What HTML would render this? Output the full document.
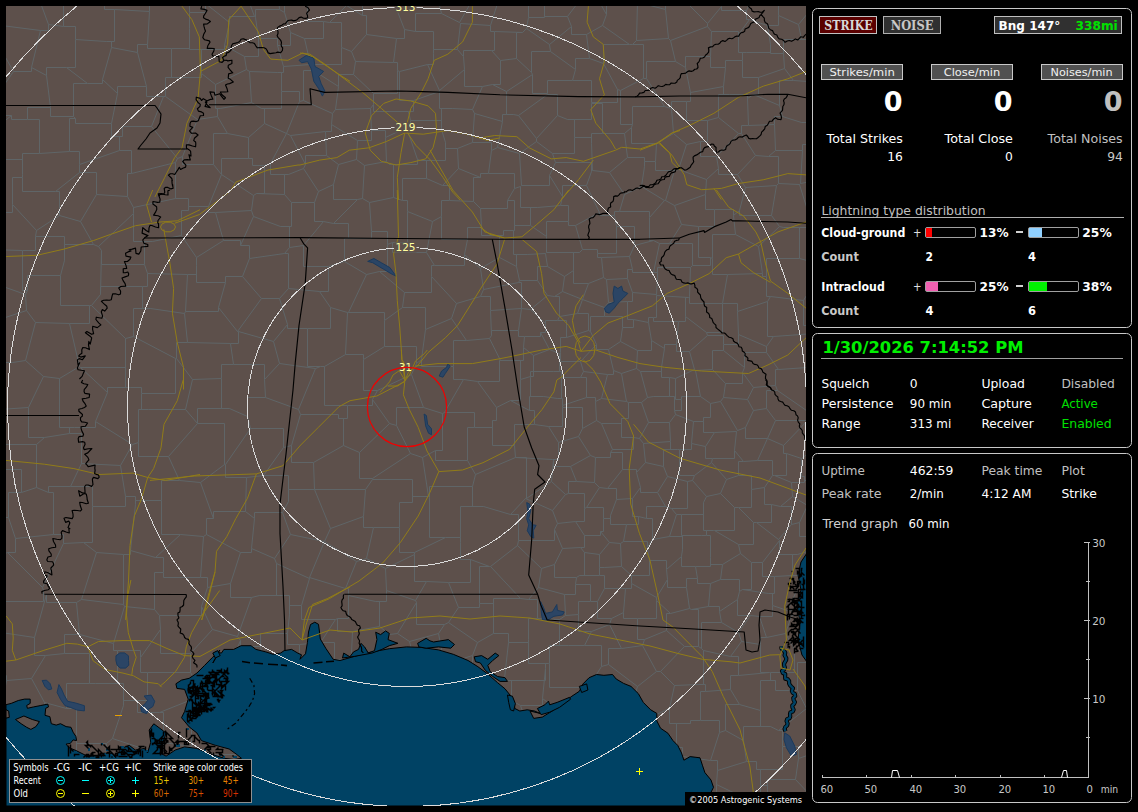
<!DOCTYPE html>
<html><head><meta charset="utf-8"><title>NexStorm</title>
<style>html,body{margin:0;padding:0;background:#000;overflow:hidden}svg{display:block}text{white-space:pre}</style>
</head><body>
<svg width="1138" height="812" viewBox="0 0 1138 812">
<rect width="1138" height="812" fill="#000"/>
<defs><clipPath id="mc"><rect x="6" y="6" width="800" height="800"/></clipPath></defs>
<g clip-path="url(#mc)">
<rect x="6" y="6" width="800" height="800" fill="#5d504b"/>
<path d="M801.5 458.5L820.5 444.5M801.5 458.5V476.5H804.5M804.5 476.5V480.5H814.5M801.5 458.5L786.5 453.5M786.5 453.5H783.5V445.5M783.5 445.5L809.5 418.5M816.5 654.5L794.5 649.5M817.5 662.5H797.5V690.5M794.5 649.5V672.5H770.5M797.5 690.5H775.5V680.5M775.5 680.5H770.5V672.5M816.5 2.5L798.5 24.5M828.5 48.5V39.5H801.5M798.5 24.5L801.5 39.5M34.5 -13.5L48.5 24.5M84.5 -8.5H63.5V26.5M63.5 26.5L48.5 24.5M-6.5 24.5L40.5 30.5M40.5 30.5H48.5V24.5M363.5 516.5L330.5 528.5M363.5 516.5L365.5 489.5M365.5 489.5L314.5 489.5M330.5 528.5L314.5 489.5M246.5 808.5L234.5 791.5M234.5 791.5L235.5 785.5M286.5 774.5V756.5H267.5M286.5 774.5L282.5 792.5M262.5 809.5L282.5 792.5M235.5 785.5H267.5V756.5M723.5 350.5L744.5 367.5M723.5 350.5H712.5V369.5M712.5 369.5L725.5 383.5M725.5 383.5H742.5V372.5M744.5 367.5L742.5 372.5M766.5 352.5L766.5 346.5M766.5 352.5H744.5V367.5M766.5 346.5L738.5 334.5M738.5 334.5V344.5H723.5M723.5 344.5L723.5 350.5M785.5 633.5L794.5 649.5M785.5 633.5L791.5 615.5M791.5 615.5L804.5 616.5M827.5 639.5L804.5 616.5M689.5 351.5L707.5 335.5M689.5 351.5L694.5 369.5M723.5 344.5V335.5H707.5M712.5 369.5L695.5 370.5M694.5 369.5L695.5 370.5M785.5 633.5L766.5 637.5M769.5 672.5L770.5 672.5M769.5 672.5H760.5V644.5M760.5 644.5V637.5H766.5M791.5 615.5V610.5H787.5M787.5 610.5L772.5 605.5M766.5 637.5L759.5 616.5M772.5 605.5V616.5H759.5M760.5 644.5L741.5 641.5M741.5 641.5L738.5 632.5M738.5 632.5L750.5 615.5M759.5 616.5L750.5 615.5M760.5 710.5L739.5 704.5M760.5 710.5V726.5H770.5M770.5 726.5H743.5V740.5M739.5 704.5H725.5V730.5M725.5 730.5L743.5 740.5M797.5 690.5L806.5 708.5M775.5 680.5H760.5V710.5M806.5 708.5L778.5 730.5M778.5 730.5L770.5 726.5M746.5 761.5L743.5 740.5M746.5 761.5H756.5V769.5M778.5 730.5H782.5V746.5M756.5 769.5H782.5V746.5M806.5 708.5L808.5 709.5M746.5 761.5L717.5 770.5M717.5 770.5V760.5H710.5M725.5 730.5L719.5 732.5M710.5 760.5L719.5 732.5M738.5 334.5L737.5 311.5M737.5 311.5V303.5H722.5M707.5 335.5L706.5 332.5M706.5 332.5H722.5V303.5M722.5 303.5L722.5 303.5M161.5 0.5H149.5V11.5M161.5 0.5H189.5V12.5M149.5 11.5L147.5 44.5M189.5 12.5L189.5 28.5M189.5 28.5V48.5H171.5M147.5 44.5V48.5H171.5M104.5 -6.5V9.5H114.5M114.5 9.5L149.5 11.5M205.5 3.5V12.5H189.5M122.5 136.5V126.5H151.5M122.5 136.5H119.5V150.5M119.5 150.5H131.5V173.5M175.5 162.5L131.5 173.5M175.5 162.5L177.5 158.5M151.5 126.5L177.5 158.5M288.5 288.5L319.5 291.5M288.5 288.5V253.5H284.5M319.5 291.5H328.5V266.5M289.5 247.5L284.5 253.5M289.5 247.5L303.5 245.5M328.5 266.5H303.5V245.5M289.5 247.5V226.5H280.5M284.5 253.5L249.5 258.5M280.5 226.5L253.5 216.5M249.5 258.5V245.5H240.5M240.5 245.5L253.5 216.5M229.5 22.5V16.5H254.5M229.5 22.5L205.5 3.5M254.5 16.5L244.5 -10.5M224.5 45.5L244.5 56.5M224.5 45.5V49.5H210.5M210.5 49.5H201.5V73.5M244.5 56.5L246.5 69.5M246.5 69.5L215.5 84.5M201.5 73.5L215.5 84.5M229.5 22.5L224.5 45.5M189.5 28.5V49.5H210.5M182.5 77.5H201.5V73.5M182.5 77.5H171.5V48.5M313.5 70.5L338.5 86.5M313.5 70.5H303.5V100.5M303.5 100.5L332.5 113.5M338.5 86.5L335.5 109.5M335.5 109.5L332.5 113.5M284.5 12.5L279.5 9.5M284.5 12.5L290.5 32.5M279.5 9.5H255.5V17.5M290.5 32.5V45.5H277.5M277.5 45.5V38.5H258.5M255.5 17.5L258.5 38.5M254.5 16.5L255.5 17.5M277.5 -18.5L279.5 9.5M244.5 56.5H258.5V38.5M80.5 788.5L105.5 766.5M80.5 788.5H93.5V812.5M105.5 766.5V786.5H125.5M125.5 786.5V812.5H121.5M263.5 475.5L283.5 447.5M263.5 475.5H288.5V501.5M313.5 462.5L314.5 489.5M313.5 462.5H291.5V445.5M288.5 501.5V489.5H314.5M291.5 445.5L283.5 447.5M338.5 418.5H347.5V405.5M338.5 418.5V414.5H300.5M347.5 405.5H324.5V366.5M300.5 414.5L298.5 409.5M298.5 409.5L315.5 368.5M315.5 368.5L320.5 366.5M320.5 366.5L324.5 366.5M313.5 462.5L343.5 445.5M343.5 445.5V418.5H338.5M291.5 445.5L300.5 414.5M666.5 630.5L684.5 646.5M666.5 630.5L644.5 639.5M684.5 646.5L660.5 671.5M656.5 671.5L660.5 671.5M656.5 671.5L642.5 645.5M644.5 639.5L642.5 645.5M282.5 792.5V815.5H313.5M234.5 791.5H201.5V798.5M201.5 798.5V821.5H192.5M-0.5 675.5H6.5V680.5M6.5 680.5L-1.5 723.5M31.5 678.5L6.5 680.5M31.5 678.5L44.5 702.5M44.5 702.5V732.5H20.5M-1.5 723.5V732.5H20.5M363.5 516.5V527.5H373.5M373.5 527.5L366.5 558.5M330.5 528.5L324.5 541.5M366.5 558.5L356.5 561.5M356.5 561.5L324.5 541.5M324.5 541.5L324.5 541.5M356.5 561.5L345.5 588.5M345.5 588.5L309.5 577.5M324.5 541.5L309.5 577.5M112.5 738.5L151.5 751.5M112.5 738.5L106.5 743.5M106.5 743.5L105.5 766.5M125.5 786.5H152.5V776.5M151.5 751.5L152.5 776.5M159.5 812.5L160.5 784.5M152.5 776.5L160.5 784.5M201.5 798.5L187.5 779.5M160.5 784.5L187.5 779.5M263.5 475.5L246.5 477.5M283.5 447.5V428.5H250.5M250.5 428.5L225.5 464.5M246.5 477.5H225.5V464.5M-6.5 395.5V362.5H12.5M12.5 362.5H-22.5V346.5M43.5 376.5L25.5 360.5M43.5 376.5L59.5 378.5M59.5 378.5L79.5 366.5M79.5 366.5L69.5 323.5M25.5 360.5L35.5 322.5M35.5 322.5L69.5 323.5M-0.5 409.5L28.5 407.5M28.5 407.5L43.5 376.5M12.5 362.5L25.5 360.5M74.5 427.5H69.5V433.5M74.5 427.5H59.5V378.5M28.5 407.5V437.5H44.5M44.5 437.5L69.5 433.5M-15.5 324.5L26.5 310.5M26.5 310.5L35.5 322.5M80.5 367.5H125.5V338.5M80.5 367.5L79.5 366.5M89.5 305.5L91.5 305.5M89.5 305.5V323.5H69.5M91.5 305.5L125.5 338.5M831.5 177.5L800.5 183.5M800.5 183.5L799.5 184.5M808.5 213.5L799.5 184.5M783.5 227.5H808.5V213.5M783.5 227.5H799.5V258.5M814.5 262.5L799.5 258.5M685.5 316.5L706.5 332.5M685.5 316.5V321.5H678.5M689.5 351.5H676.5V344.5M678.5 321.5L676.5 344.5M797.5 554.5H779.5V540.5M797.5 554.5H792.5V575.5M779.5 540.5L762.5 562.5M762.5 562.5V576.5H774.5M774.5 576.5L792.5 575.5M787.5 610.5L800.5 582.5M800.5 582.5V575.5H792.5M768.5 593.5H772.5V605.5M768.5 593.5H774.5V576.5M818.5 536.5H799.5V522.5M807.5 505.5L799.5 522.5M800.5 582.5L810.5 583.5M804.5 616.5V598.5H819.5M810.5 550.5L797.5 554.5M720.5 493.5L734.5 507.5M720.5 493.5L726.5 479.5M751.5 489.5V507.5H738.5M751.5 489.5V475.5H738.5M734.5 507.5L738.5 507.5M726.5 479.5L738.5 475.5M679.5 449.5H691.5V443.5M679.5 449.5V475.5H694.5M691.5 443.5L705.5 446.5M705.5 446.5V458.5H712.5M694.5 475.5L711.5 462.5M711.5 462.5L712.5 458.5M714.5 432.5L705.5 446.5M714.5 432.5L736.5 431.5M736.5 431.5L734.5 450.5M734.5 450.5V458.5H712.5M706.5 496.5L692.5 480.5M706.5 496.5L720.5 493.5M692.5 480.5L694.5 475.5M726.5 479.5L711.5 462.5M743.5 461.5L734.5 450.5M743.5 461.5H738.5V475.5M675.5 378.5L694.5 369.5M675.5 378.5V399.5H681.5M695.5 370.5L700.5 396.5M681.5 399.5V396.5H700.5M714.5 432.5H703.5V417.5M691.5 443.5L693.5 421.5M693.5 421.5H703.5V417.5M736.5 431.5L737.5 430.5M737.5 430.5L720.5 401.5M720.5 401.5L710.5 403.5M703.5 417.5H710.5V403.5M725.5 383.5L723.5 397.5M720.5 401.5L723.5 397.5M710.5 403.5L700.5 396.5M721.5 622.5L738.5 632.5M721.5 622.5H701.5V648.5M701.5 648.5L703.5 650.5M741.5 641.5L730.5 656.5M730.5 656.5L703.5 650.5M769.5 672.5L738.5 675.5M730.5 656.5H738.5V675.5M739.5 704.5L730.5 689.5M738.5 675.5H730.5V689.5M721.5 622.5L719.5 611.5M750.5 615.5H737.5V599.5M737.5 599.5L719.5 611.5M701.5 648.5L698.5 646.5M698.5 646.5V609.5H691.5M691.5 609.5L708.5 606.5M719.5 611.5V606.5H708.5M738.5 824.5V796.5H741.5M715.5 820.5L705.5 794.5M741.5 796.5L716.5 784.5M716.5 784.5V794.5H705.5M717.5 770.5L716.5 784.5M756.5 769.5H760.5V785.5M760.5 785.5V796.5H741.5M760.5 785.5H767.5V789.5M775.5 816.5H767.5V789.5M782.5 746.5H798.5V758.5M798.5 758.5L795.5 779.5M767.5 789.5V779.5H795.5M798.5 758.5L818.5 751.5M600.5 819.5L577.5 802.5M577.5 802.5L586.5 777.5M586.5 777.5L599.5 773.5M619.5 809.5H599.5V773.5M577.5 802.5V805.5H557.5M564.5 765.5V777.5H586.5M564.5 765.5H547.5V790.5M547.5 790.5H557.5V805.5M553.5 818.5V805.5H557.5M669.5 708.5L674.5 685.5M669.5 708.5V723.5H690.5M674.5 685.5L698.5 684.5M700.5 720.5H690.5V723.5M700.5 720.5V691.5H705.5M705.5 691.5V684.5H698.5M645.5 731.5L649.5 717.5M645.5 731.5V743.5H654.5M649.5 717.5L669.5 708.5M654.5 743.5V747.5H676.5M676.5 747.5V723.5H690.5M698.5 646.5L684.5 646.5M660.5 671.5L674.5 685.5M703.5 650.5V684.5H698.5M710.5 760.5L682.5 756.5M719.5 732.5V720.5H700.5M682.5 756.5V747.5H676.5M730.5 689.5L705.5 691.5M798.5 24.5L778.5 15.5M778.5 15.5L778.5 -3.5M800.5 183.5L802.5 150.5M808.5 144.5H802.5V150.5M372.5 399.5L389.5 423.5M372.5 399.5L377.5 390.5M377.5 390.5L411.5 374.5M389.5 423.5L396.5 425.5M396.5 425.5V407.5H423.5M411.5 374.5L423.5 407.5M343.5 445.5L359.5 452.5M347.5 405.5H372.5V399.5M359.5 452.5L389.5 423.5M384.5 346.5L363.5 359.5M384.5 346.5L384.5 320.5M384.5 320.5V312.5H348.5M345.5 354.5L347.5 312.5M345.5 354.5H363.5V359.5M348.5 312.5L347.5 312.5M416.5 363.5V346.5H384.5M416.5 363.5L411.5 374.5M377.5 390.5H363.5V359.5M307.5 328.5H330.5V307.5M307.5 328.5V366.5H320.5M330.5 307.5L347.5 312.5M324.5 366.5L345.5 354.5M319.5 291.5L330.5 307.5M328.5 266.5L344.5 261.5M366.5 274.5L344.5 261.5M366.5 274.5L348.5 312.5M122.5 136.5H111.5V123.5M119.5 150.5L79.5 164.5M79.5 164.5V151.5H69.5M69.5 151.5V118.5H75.5M111.5 123.5H75.5V118.5M175.5 162.5L175.5 198.5M131.5 173.5H127.5V196.5M127.5 196.5L133.5 207.5M133.5 207.5L175.5 198.5M353.5 74.5L373.5 93.5M353.5 74.5H338.5V86.5M370.5 108.5L335.5 109.5M370.5 108.5L373.5 104.5M373.5 93.5L373.5 104.5M303.5 245.5L323.5 221.5M348.5 238.5H344.5V261.5M348.5 238.5V223.5H333.5M323.5 221.5L333.5 223.5M280.5 226.5H291.5V202.5M291.5 202.5L314.5 202.5M323.5 221.5H314.5V202.5M333.5 223.5L357.5 199.5M314.5 202.5L318.5 191.5M318.5 191.5L333.5 184.5M333.5 184.5V199.5H357.5M213.5 164.5V133.5H227.5M213.5 164.5H182.5V156.5M182.5 156.5L197.5 119.5M227.5 133.5L217.5 116.5M217.5 116.5L197.5 119.5M165.5 96.5L197.5 119.5M165.5 96.5L163.5 96.5M163.5 96.5L151.5 126.5M177.5 158.5L182.5 156.5M182.5 77.5H165.5V96.5M220.5 108.5H215.5V84.5M220.5 108.5H217.5V116.5M371.5 231.5H387.5V244.5M371.5 231.5L369.5 202.5M369.5 202.5L393.5 197.5M392.5 242.5H407.5V211.5M392.5 242.5L387.5 244.5M393.5 197.5L402.5 200.5M402.5 200.5H407.5V211.5M379.5 271.5H387.5V244.5M379.5 271.5L366.5 274.5M348.5 238.5H371.5V231.5M362.5 198.5L357.5 199.5M362.5 198.5L369.5 202.5M432.5 221.5L426.5 252.5M432.5 221.5L407.5 211.5M426.5 252.5H392.5V242.5M449.5 200.5V185.5H442.5M449.5 200.5H441.5V216.5M426.5 178.5L442.5 185.5M426.5 178.5H402.5V200.5M441.5 216.5L432.5 221.5M127.5 196.5L96.5 194.5M79.5 164.5L79.5 172.5M96.5 194.5V172.5H79.5M473.5 201.5L449.5 200.5M473.5 201.5L480.5 208.5M467.5 239.5H441.5V216.5M467.5 239.5V227.5H481.5M481.5 227.5L480.5 208.5M514.5 188.5L507.5 200.5M514.5 188.5V173.5H488.5M473.5 201.5V177.5H480.5M507.5 200.5V208.5H480.5M488.5 173.5H480.5V177.5M442.5 185.5L458.5 168.5M480.5 177.5L458.5 168.5M426.5 178.5V160.5H420.5M420.5 160.5H445.5V142.5M445.5 142.5V148.5H457.5M458.5 168.5L457.5 148.5M310.5 64.5L310.5 64.5M310.5 64.5L283.5 66.5M283.5 66.5L277.5 45.5M290.5 32.5L304.5 38.5M304.5 38.5L310.5 64.5M353.5 74.5L355.5 61.5M310.5 64.5L313.5 70.5M355.5 61.5L351.5 51.5M351.5 51.5L341.5 47.5M310.5 64.5H341.5V47.5M331.5 124.5L332.5 113.5M331.5 124.5L357.5 140.5M370.5 108.5L371.5 130.5M371.5 130.5V140.5H357.5M325.5 131.5H331.5V124.5M325.5 131.5L326.5 155.5M326.5 155.5L338.5 164.5M338.5 164.5L356.5 159.5M357.5 140.5L356.5 159.5M338.5 164.5L333.5 184.5M362.5 198.5L364.5 165.5M356.5 159.5L364.5 165.5M277.5 72.5L249.5 71.5M277.5 72.5H281.5V91.5M281.5 91.5V108.5H261.5M249.5 71.5L251.5 102.5M251.5 102.5L261.5 108.5M246.5 69.5L249.5 71.5M283.5 66.5V72.5H277.5M303.5 100.5L299.5 101.5M299.5 101.5V91.5H281.5M220.5 108.5L251.5 102.5M54.5 754.5V784.5H58.5M54.5 754.5L27.5 745.5M27.5 745.5L6.5 778.5M54.5 788.5L14.5 788.5M54.5 788.5V784.5H58.5M14.5 788.5H6.5V778.5M80.5 788.5L58.5 784.5M76.5 735.5V754.5H54.5M76.5 735.5V743.5H106.5M66.5 708.5H76.5V735.5M66.5 708.5L44.5 702.5M20.5 732.5H27.5V745.5M-1.5 777.5L6.5 778.5M12.5 818.5L14.5 788.5M49.5 824.5H54.5V788.5M365.5 489.5L372.5 479.5M314.5 489.5L314.5 489.5M359.5 452.5V478.5H372.5M372.5 479.5L372.5 478.5M396.5 425.5L410.5 453.5M372.5 478.5L410.5 453.5M423.5 407.5L442.5 413.5M410.5 453.5L422.5 457.5M422.5 457.5L435.5 450.5M442.5 413.5V450.5H435.5M286.5 774.5V767.5H313.5M313.5 767.5V774.5H319.5M319.5 774.5L318.5 810.5M235.5 785.5L216.5 754.5M267.5 756.5L264.5 740.5M264.5 740.5V726.5H243.5M216.5 754.5H243.5V726.5M187.5 779.5H196.5V752.5M216.5 754.5L196.5 752.5M200.5 482.5L224.5 464.5M200.5 482.5L179.5 480.5M224.5 464.5V423.5H197.5M197.5 423.5L197.5 423.5M197.5 423.5L168.5 456.5M179.5 480.5L168.5 456.5M95.5 421.5L132.5 444.5M95.5 421.5L107.5 392.5M107.5 392.5V387.5H130.5M132.5 444.5L138.5 442.5M138.5 442.5V409.5H148.5M148.5 409.5H141.5V393.5M141.5 393.5V387.5H130.5M74.5 427.5H95.5V421.5M80.5 367.5L107.5 392.5M125.5 338.5L125.5 338.5M125.5 338.5V387.5H130.5M185.5 409.5L197.5 423.5M185.5 409.5L148.5 409.5M168.5 456.5H138.5V442.5M185.5 409.5L192.5 379.5M175.5 358.5V393.5H141.5M175.5 358.5L176.5 358.5M192.5 379.5L176.5 358.5M175.5 358.5L133.5 336.5M125.5 338.5L133.5 336.5M25.5 294.5L-5.5 283.5M25.5 294.5L27.5 290.5M27.5 290.5H22.5V250.5M22.5 250.5L-11.5 249.5M26.5 310.5L25.5 294.5M89.5 305.5H60.5V275.5M60.5 275.5H27.5V290.5M44.5 437.5L36.5 444.5M-2.5 444.5L36.5 444.5M-5.5 631.5L34.5 637.5M31.5 678.5L45.5 655.5M45.5 655.5H34.5V637.5M91.5 305.5L100.5 294.5M150.5 308.5H133.5V336.5M150.5 308.5H142.5V286.5M100.5 294.5V286.5H142.5M543.5 396.5H530.5V377.5M543.5 396.5L557.5 398.5M561.5 383.5V398.5H557.5M561.5 383.5V371.5H553.5M553.5 371.5H530.5V377.5M766.5 346.5L773.5 336.5M737.5 311.5L767.5 301.5M773.5 336.5H767.5V301.5M583.5 371.5L607.5 374.5M583.5 371.5L580.5 361.5M608.5 349.5L613.5 370.5M608.5 349.5H596.5V344.5M580.5 361.5L596.5 344.5M607.5 374.5H613.5V370.5M648.5 422.5L641.5 402.5M648.5 422.5L669.5 422.5M669.5 422.5L675.5 414.5M653.5 396.5L647.5 397.5M653.5 396.5H674.5V410.5M674.5 410.5L675.5 414.5M641.5 402.5L647.5 397.5M639.5 438.5L648.5 422.5M639.5 438.5L643.5 443.5M643.5 443.5L670.5 441.5M670.5 441.5L669.5 422.5M677.5 449.5H670.5V441.5M677.5 449.5L679.5 449.5M693.5 421.5L675.5 414.5M675.5 378.5L669.5 377.5M669.5 377.5V396.5H653.5M681.5 399.5V410.5H674.5M661.5 367.5V371.5H640.5M661.5 367.5L664.5 348.5M664.5 348.5L651.5 340.5M651.5 340.5V350.5H637.5M637.5 350.5L636.5 368.5M640.5 371.5L636.5 368.5M669.5 377.5H661.5V367.5M647.5 397.5L640.5 371.5M676.5 344.5H664.5V348.5M678.5 321.5H653.5V317.5M653.5 317.5H648.5V322.5M648.5 322.5L651.5 340.5M608.5 349.5L620.5 341.5M620.5 341.5L637.5 350.5M621.5 373.5L613.5 370.5M621.5 373.5L636.5 368.5M622.5 327.5V316.5H604.5M622.5 327.5H633.5V319.5M633.5 319.5H627.5V301.5M627.5 301.5L608.5 302.5M604.5 316.5L604.5 307.5M608.5 302.5L604.5 307.5M620.5 341.5L622.5 327.5M590.5 331.5L596.5 344.5M590.5 331.5V316.5H604.5M648.5 322.5L633.5 319.5M580.5 377.5H586.5V397.5M580.5 377.5H561.5V383.5M557.5 398.5H562.5V405.5M586.5 397.5L562.5 405.5M264.5 740.5H284.5V729.5M315.5 758.5L313.5 767.5M315.5 758.5L309.5 741.5M309.5 741.5V729.5H284.5M804.5 476.5V482.5H791.5M807.5 505.5L792.5 496.5M791.5 482.5L792.5 496.5M786.5 453.5V475.5H774.5M791.5 482.5L774.5 475.5M757.5 460.5L743.5 461.5M757.5 460.5H772.5V475.5M751.5 489.5L764.5 487.5M764.5 487.5L772.5 475.5M756.5 522.5H771.5V504.5M756.5 522.5L778.5 539.5M778.5 539.5L791.5 524.5M791.5 524.5V506.5H780.5M771.5 504.5L780.5 506.5M753.5 522.5L738.5 507.5M753.5 522.5L756.5 522.5M764.5 487.5V504.5H771.5M779.5 540.5L778.5 539.5M799.5 522.5L791.5 524.5M792.5 496.5L780.5 506.5M774.5 475.5L772.5 475.5M622.5 469.5V452.5H610.5M622.5 469.5L607.5 488.5M610.5 452.5V457.5H595.5M595.5 457.5L594.5 482.5M594.5 482.5L599.5 487.5M607.5 488.5L599.5 487.5M609.5 624.5L611.5 618.5M609.5 624.5L591.5 631.5M590.5 601.5H578.5V614.5M590.5 601.5L597.5 601.5M591.5 631.5H578.5V614.5M597.5 601.5V618.5H611.5M666.5 630.5V613.5H670.5M691.5 609.5L689.5 608.5M670.5 613.5L689.5 608.5M652.5 539.5V518.5H646.5M652.5 539.5L669.5 536.5M646.5 518.5V506.5H665.5M665.5 506.5L671.5 508.5M671.5 508.5L676.5 514.5M676.5 514.5L669.5 536.5M742.5 372.5L753.5 387.5M723.5 397.5L747.5 399.5M747.5 399.5L753.5 387.5M778.5 369.5L766.5 352.5M778.5 369.5H775.5V385.5M753.5 387.5L775.5 385.5M806.5 410.5L777.5 390.5M778.5 369.5L807.5 367.5M775.5 385.5L777.5 390.5M745.5 427.5L753.5 410.5M745.5 427.5V438.5H767.5M775.5 420.5L767.5 438.5M775.5 420.5L766.5 408.5M766.5 408.5L753.5 410.5M767.5 438.5L767.5 438.5M737.5 430.5L745.5 427.5M747.5 399.5L753.5 410.5M757.5 460.5L767.5 438.5M783.5 445.5L767.5 438.5M807.5 413.5V420.5H775.5M777.5 390.5H766.5V408.5M753.5 522.5V544.5H738.5M734.5 507.5V530.5H714.5M714.5 530.5L738.5 544.5M636.5 472.5L645.5 462.5M636.5 472.5L640.5 487.5M645.5 462.5L663.5 466.5M640.5 487.5V492.5H657.5M657.5 492.5L667.5 476.5M663.5 466.5L667.5 476.5M622.5 469.5H636.5V472.5M610.5 452.5L612.5 449.5M612.5 449.5H633.5V437.5M633.5 437.5L639.5 438.5M643.5 443.5L645.5 462.5M632.5 498.5L640.5 487.5M632.5 498.5L616.5 499.5M616.5 499.5V488.5H607.5M677.5 449.5H663.5V466.5M632.5 498.5V516.5H638.5M638.5 516.5L646.5 518.5M665.5 506.5L657.5 492.5M687.5 481.5V508.5H671.5M687.5 481.5L667.5 476.5M692.5 480.5L687.5 481.5M742.5 589.5L739.5 591.5M742.5 589.5H751.5V562.5M739.5 591.5V579.5H720.5M720.5 579.5L722.5 564.5M722.5 564.5L740.5 553.5M751.5 562.5L740.5 553.5M768.5 593.5L742.5 589.5M737.5 599.5L739.5 591.5M762.5 562.5L751.5 562.5M710.5 583.5L708.5 606.5M710.5 583.5L720.5 579.5M738.5 544.5L740.5 553.5M805.5 815.5L811.5 796.5M795.5 779.5L811.5 796.5M675.5 780.5H645.5V786.5M675.5 780.5V795.5H689.5M689.5 795.5L674.5 823.5M674.5 823.5H642.5V794.5M642.5 794.5L645.5 786.5M654.5 743.5L641.5 775.5M641.5 775.5H645.5V786.5M682.5 756.5L675.5 780.5M705.5 794.5L689.5 795.5M622.5 810.5L642.5 794.5M610.5 705.5H589.5V685.5M610.5 705.5L635.5 693.5M637.5 686.5L635.5 693.5M637.5 686.5L608.5 664.5M589.5 685.5L601.5 666.5M601.5 666.5L608.5 664.5M649.5 717.5L635.5 693.5M656.5 671.5L637.5 686.5M621.5 648.5L642.5 645.5M621.5 648.5H608.5V664.5M568.5 645.5L584.5 645.5M568.5 645.5H549.5V663.5M584.5 645.5H601.5V666.5M549.5 663.5V687.5H583.5M583.5 687.5L589.5 685.5M621.5 648.5L609.5 624.5M584.5 645.5L591.5 631.5M599.5 773.5L605.5 763.5M641.5 775.5L613.5 760.5M613.5 760.5L605.5 763.5M645.5 731.5L625.5 734.5M613.5 760.5L625.5 734.5M610.5 705.5L610.5 722.5M625.5 734.5L610.5 722.5M757.5 -14.5L746.5 10.5M746.5 10.5H721.5V6.5M379.5 271.5L404.5 292.5M384.5 320.5L402.5 307.5M404.5 292.5L402.5 307.5M50.5 107.5H27.5V119.5M50.5 107.5L46.5 75.5M11.5 115.5H4.5V84.5M11.5 115.5V119.5H27.5M13.5 71.5L4.5 84.5M13.5 71.5H31.5V67.5M31.5 67.5L46.5 75.5M39.5 153.5L69.5 151.5M39.5 153.5V119.5H27.5M75.5 118.5L73.5 116.5M73.5 116.5H50.5V107.5M-8.5 131.5L11.5 115.5M-2.5 159.5H22.5V174.5M22.5 174.5V153.5H39.5M-7.5 34.5L13.5 71.5M40.5 30.5L31.5 67.5M163.5 96.5H146.5V86.5M111.5 123.5L117.5 93.5M146.5 86.5H117.5V93.5M147.5 44.5H137.5V52.5M146.5 86.5L137.5 52.5M221.5 174.5L213.5 164.5M221.5 174.5L221.5 174.5M221.5 174.5V158.5H252.5M227.5 133.5L248.5 137.5M252.5 158.5H248.5V137.5M299.5 101.5L286.5 133.5M261.5 108.5H264.5V123.5M286.5 133.5L264.5 123.5M248.5 137.5L264.5 123.5M240.5 245.5V240.5H223.5M251.5 210.5L253.5 216.5M251.5 210.5L215.5 212.5M223.5 240.5L215.5 212.5M221.5 174.5L208.5 206.5M175.5 198.5H188.5V210.5M188.5 210.5V206.5H208.5M251.5 210.5L253.5 195.5M253.5 195.5L221.5 174.5M208.5 206.5V212.5H215.5M288.5 288.5L279.5 298.5M307.5 328.5H287.5V324.5M287.5 324.5L279.5 298.5M192.5 379.5L221.5 378.5M197.5 423.5V408.5H229.5M221.5 378.5V408.5H229.5M250.5 428.5L247.5 416.5M298.5 409.5L265.5 397.5M265.5 397.5H247.5V416.5M225.5 464.5L224.5 464.5M229.5 408.5L247.5 416.5M150.5 308.5L184.5 313.5M176.5 358.5V342.5H187.5M184.5 313.5L187.5 342.5M60.5 275.5L64.5 260.5M22.5 250.5H35.5V236.5M64.5 260.5V236.5H35.5M507.5 200.5H514.5V230.5M514.5 230.5L513.5 230.5M481.5 227.5V235.5H503.5M503.5 235.5V230.5H513.5M307.5 5.5V21.5H323.5M323.5 21.5L329.5 22.5M329.5 22.5L346.5 5.5M284.5 12.5V5.5H307.5M304.5 38.5H323.5V21.5M341.5 47.5V22.5H329.5M366.5 34.5L351.5 51.5M366.5 34.5V15.5H362.5M362.5 15.5L346.5 5.5M406.5 127.5L417.5 159.5M406.5 127.5L385.5 137.5M385.5 137.5L386.5 161.5M417.5 159.5V164.5H389.5M389.5 164.5L386.5 161.5M420.5 160.5L417.5 159.5M410.5 120.5V127.5H406.5M410.5 120.5H441.5V129.5M441.5 129.5L445.5 142.5M410.5 120.5L408.5 111.5M408.5 111.5H373.5V104.5M371.5 130.5H385.5V137.5M364.5 165.5L386.5 161.5M393.5 197.5V164.5H389.5M429.5 497.5V537.5H445.5M429.5 497.5L428.5 496.5M428.5 496.5H412.5V502.5M412.5 502.5H399.5V527.5M399.5 527.5V552.5H414.5M414.5 552.5L445.5 537.5M472.5 486.5H429.5V497.5M472.5 486.5V506.5H483.5M460.5 542.5V506.5H483.5M460.5 542.5V537.5H445.5M372.5 479.5H412.5V502.5M422.5 457.5L428.5 496.5M373.5 527.5L399.5 527.5M366.5 558.5L385.5 568.5M414.5 554.5L385.5 568.5M414.5 554.5L414.5 552.5M479.5 603.5V607.5H458.5M479.5 603.5V566.5H489.5M458.5 607.5L448.5 582.5M448.5 582.5H470.5V559.5M489.5 566.5L470.5 559.5M477.5 642.5L493.5 633.5M477.5 642.5L448.5 622.5M448.5 622.5L458.5 607.5M493.5 617.5L493.5 633.5M493.5 617.5V603.5H479.5M414.5 554.5V581.5H426.5M426.5 581.5L448.5 582.5M460.5 542.5V559.5H470.5M477.5 642.5L472.5 655.5M508.5 642.5V633.5H493.5M508.5 642.5L504.5 678.5M504.5 678.5L484.5 676.5M472.5 655.5V676.5H484.5M448.5 622.5L444.5 624.5M438.5 633.5L444.5 624.5M438.5 633.5L444.5 664.5M472.5 655.5L444.5 664.5M459.5 721.5L442.5 718.5M459.5 721.5H471.5V710.5M442.5 718.5L433.5 687.5M471.5 710.5L469.5 692.5M469.5 692.5H438.5V675.5M433.5 687.5H438.5V675.5M430.5 725.5L442.5 718.5M430.5 725.5L411.5 719.5M411.5 719.5L410.5 698.5M433.5 687.5H410.5V698.5M438.5 633.5L409.5 641.5M409.5 641.5L415.5 664.5M444.5 664.5L438.5 674.5M415.5 664.5L438.5 674.5M484.5 676.5L469.5 692.5M438.5 674.5L438.5 675.5M472.5 486.5L475.5 474.5M435.5 450.5V460.5H467.5M475.5 474.5L467.5 460.5M525.5 498.5L552.5 510.5M525.5 498.5L510.5 514.5M510.5 514.5H518.5V540.5M518.5 540.5H554.5V529.5M552.5 510.5L557.5 523.5M557.5 523.5L554.5 529.5M590.5 601.5V584.5H575.5M578.5 614.5L565.5 615.5M575.5 584.5V594.5H564.5M564.5 594.5L565.5 615.5M568.5 645.5H559.5V619.5M559.5 619.5L565.5 615.5M528.5 639.5V618.5H537.5M528.5 639.5V663.5H548.5M549.5 663.5L548.5 663.5M559.5 619.5L537.5 618.5M541.5 568.5L538.5 587.5M541.5 568.5L517.5 545.5M490.5 566.5L517.5 545.5M490.5 566.5L520.5 598.5M538.5 587.5L528.5 599.5M520.5 598.5L528.5 599.5M575.5 584.5L576.5 577.5M576.5 577.5H554.5V564.5M554.5 564.5L541.5 568.5M564.5 594.5L538.5 587.5M518.5 540.5L517.5 545.5M554.5 529.5L562.5 548.5M554.5 564.5L562.5 548.5M483.5 506.5L510.5 514.5M489.5 566.5L490.5 566.5M493.5 617.5V598.5H520.5M537.5 618.5V599.5H528.5M528.5 639.5V642.5H508.5M399.5 790.5L408.5 791.5M399.5 790.5L389.5 817.5M428.5 816.5V791.5H408.5M547.5 790.5L526.5 785.5M531.5 830.5L512.5 800.5M512.5 800.5L526.5 785.5M500.5 743.5H493.5V715.5M500.5 743.5V753.5H494.5M459.5 721.5L465.5 749.5M465.5 749.5L490.5 755.5M493.5 715.5L471.5 710.5M494.5 753.5L490.5 755.5M356.5 798.5L347.5 780.5M356.5 798.5L389.5 780.5M347.5 780.5H358.5V756.5M358.5 756.5H388.5V772.5M389.5 780.5L388.5 772.5M354.5 807.5L356.5 798.5M319.5 774.5L347.5 780.5M399.5 790.5V780.5H389.5M315.5 758.5V741.5H354.5M354.5 741.5V756.5H358.5M355.5 739.5L382.5 727.5M355.5 739.5L354.5 741.5M400.5 751.5H388.5V772.5M400.5 751.5L392.5 732.5M392.5 732.5H382.5V727.5M151.5 751.5H163.5V742.5M196.5 752.5L191.5 746.5M163.5 742.5L191.5 746.5M301.5 605.5H289.5V614.5M301.5 605.5V619.5H335.5M289.5 614.5L287.5 633.5M335.5 619.5L320.5 642.5M320.5 642.5L299.5 644.5M299.5 644.5H287.5V633.5M345.5 588.5H348.5V595.5M309.5 578.5L309.5 577.5M309.5 578.5L301.5 605.5M348.5 595.5V618.5H337.5M337.5 618.5L335.5 619.5M299.5 673.5L299.5 644.5M299.5 673.5L326.5 681.5M334.5 659.5V681.5H326.5M334.5 659.5V642.5H320.5M299.5 673.5H280.5V686.5M270.5 684.5L260.5 646.5M270.5 684.5L280.5 686.5M260.5 646.5V633.5H287.5M246.5 477.5L245.5 511.5M200.5 482.5L213.5 518.5M213.5 518.5V511.5H245.5M22.5 177.5V191.5H55.5M22.5 177.5H12.5V204.5M12.5 204.5L36.5 230.5M55.5 191.5H59.5V215.5M59.5 215.5L36.5 230.5M22.5 174.5L22.5 177.5M79.5 172.5L55.5 191.5M-10.5 212.5H12.5V204.5M35.5 236.5L36.5 230.5M96.5 194.5L80.5 221.5M80.5 221.5L59.5 215.5M93.5 244.5H64.5V260.5M93.5 244.5L80.5 221.5M8.5 517.5H-29.5V511.5M8.5 517.5V492.5H21.5M21.5 492.5V469.5H-11.5M-8.5 559.5L7.5 552.5M7.5 552.5H15.5V538.5M15.5 538.5L8.5 517.5M36.5 487.5L21.5 492.5M36.5 487.5L48.5 492.5M48.5 492.5H53.5V534.5M15.5 538.5L53.5 534.5M36.5 444.5L36.5 487.5M81.5 463.5L70.5 486.5M81.5 463.5L120.5 465.5M70.5 486.5H92.5V506.5M92.5 506.5H125.5V496.5M120.5 465.5L125.5 496.5M69.5 433.5H81.5V463.5M48.5 492.5V486.5H70.5M132.5 444.5L120.5 465.5M179.5 480.5H161.5V500.5M161.5 500.5H135.5V504.5M135.5 504.5V496.5H125.5M161.5 500.5V534.5H180.5M213.5 518.5H206.5V534.5M206.5 534.5L203.5 536.5M203.5 536.5L180.5 534.5M135.5 504.5L130.5 550.5M180.5 534.5L155.5 557.5M130.5 550.5L155.5 557.5M200.5 577.5L203.5 536.5M200.5 577.5H163.5V572.5M163.5 572.5V557.5H155.5M133.5 207.5L133.5 213.5M93.5 244.5L98.5 246.5M133.5 213.5L98.5 246.5M100.5 294.5L101.5 250.5M98.5 246.5L101.5 250.5M583.5 371.5L580.5 377.5M553.5 371.5H559.5V353.5M580.5 361.5H560.5V352.5M559.5 353.5L560.5 352.5M530.5 377.5L530.5 376.5M559.5 353.5L549.5 349.5M549.5 349.5L533.5 355.5M533.5 355.5V376.5H530.5M773.5 336.5L814.5 333.5M601.5 398.5L626.5 401.5M601.5 398.5L595.5 401.5M595.5 401.5L596.5 420.5M621.5 418.5H628.5V402.5M621.5 418.5V423.5H601.5M601.5 423.5L596.5 420.5M628.5 402.5L626.5 401.5M621.5 373.5L626.5 401.5M607.5 374.5L601.5 398.5M586.5 397.5H595.5V401.5M582.5 428.5L596.5 420.5M582.5 428.5V407.5H562.5M562.5 407.5L562.5 405.5M633.5 437.5H621.5V418.5M641.5 402.5L628.5 402.5M612.5 449.5L601.5 423.5M337.5 618.5V631.5H352.5M334.5 659.5H351.5V653.5M352.5 631.5L351.5 653.5M416.5 602.5L397.5 633.5M416.5 602.5L415.5 600.5M415.5 600.5L386.5 590.5M379.5 626.5L389.5 634.5M379.5 626.5V601.5H375.5M386.5 590.5V601.5H375.5M397.5 633.5L389.5 634.5M444.5 624.5H416.5V602.5M409.5 641.5L397.5 633.5M426.5 581.5L415.5 600.5M385.5 568.5L386.5 590.5M348.5 595.5L375.5 601.5M352.5 631.5L379.5 626.5M411.5 719.5H392.5V732.5M410.5 698.5L393.5 687.5M382.5 727.5H378.5V705.5M378.5 705.5L393.5 687.5M415.5 664.5L392.5 678.5M392.5 678.5L393.5 687.5M389.5 634.5H376.5V664.5M392.5 678.5L376.5 664.5M351.5 653.5H369.5V665.5M376.5 664.5L369.5 665.5M327.5 683.5L351.5 692.5M327.5 683.5L316.5 708.5M316.5 708.5H324.5V720.5M352.5 694.5L351.5 692.5M352.5 694.5L344.5 724.5M344.5 724.5L324.5 720.5M326.5 681.5L327.5 683.5M369.5 665.5V692.5H351.5M280.5 686.5L292.5 708.5M292.5 708.5L316.5 708.5M309.5 741.5V720.5H324.5M284.5 729.5L292.5 708.5M378.5 705.5L352.5 694.5M355.5 739.5H344.5V724.5M647.5 547.5V541.5H623.5M647.5 547.5L652.5 539.5M638.5 516.5V524.5H626.5M626.5 524.5L623.5 541.5M616.5 499.5L610.5 515.5M626.5 524.5H610.5V515.5M575.5 521.5L584.5 535.5M575.5 521.5H584.5V508.5M584.5 508.5L586.5 507.5M586.5 507.5H603.5V518.5M584.5 535.5H600.5V531.5M600.5 531.5H603.5V518.5M557.5 523.5L575.5 521.5M580.5 547.5L562.5 548.5M580.5 547.5H584.5V535.5M568.5 493.5L565.5 494.5M568.5 493.5H584.5V508.5M565.5 494.5L552.5 510.5M594.5 482.5L576.5 481.5M599.5 487.5L586.5 507.5M576.5 481.5H568.5V493.5M610.5 515.5V518.5H603.5M609.5 542.5L620.5 543.5M609.5 542.5L600.5 531.5M623.5 541.5L620.5 543.5M649.5 560.5V575.5H631.5M649.5 560.5L647.5 547.5M620.5 543.5L621.5 566.5M621.5 566.5L631.5 575.5M656.5 600.5L656.5 597.5M656.5 600.5V618.5H637.5M656.5 597.5L631.5 583.5M637.5 618.5H623.5V612.5M623.5 612.5L625.5 588.5M631.5 583.5V588.5H625.5M644.5 639.5H637.5V618.5M670.5 613.5L656.5 600.5M611.5 618.5L623.5 612.5M597.5 601.5L604.5 588.5M604.5 588.5L625.5 588.5M666.5 569.5L667.5 579.5M666.5 569.5L681.5 556.5M667.5 579.5V587.5H686.5M681.5 556.5V566.5H695.5M686.5 587.5V578.5H697.5M697.5 578.5L695.5 566.5M649.5 560.5H666.5V569.5M631.5 575.5L631.5 583.5M656.5 597.5L667.5 579.5M669.5 536.5H682.5V549.5M682.5 549.5L681.5 556.5M689.5 608.5L686.5 587.5M710.5 583.5H697.5V578.5M710.5 557.5V564.5H722.5M710.5 557.5V566.5H695.5M703.5 502.5V514.5H681.5M703.5 502.5V530.5H713.5M681.5 514.5V535.5H701.5M713.5 530.5H706.5V535.5M701.5 535.5L706.5 535.5M706.5 496.5L703.5 502.5M676.5 514.5L681.5 514.5M714.5 530.5L713.5 530.5M682.5 549.5V535.5H701.5M710.5 557.5V535.5H706.5M504.5 678.5L507.5 680.5M493.5 715.5L511.5 700.5M507.5 680.5H511.5V700.5M548.5 663.5H545.5V668.5M507.5 680.5H545.5V668.5M564.5 765.5L560.5 751.5M524.5 773.5L526.5 785.5M524.5 773.5H545.5V742.5M545.5 742.5L560.5 751.5M605.5 763.5H585.5V738.5M560.5 751.5H585.5V738.5M583.5 687.5V706.5H571.5M610.5 722.5V731.5H587.5M571.5 706.5L587.5 731.5M585.5 738.5L587.5 731.5M366.5 34.5L396.5 38.5M355.5 61.5L393.5 62.5M396.5 38.5L393.5 62.5M373.5 93.5H397.5V70.5M393.5 62.5H397.5V70.5M544.5 2.5V17.5H528.5M528.5 17.5V0.5H503.5M460.5 23.5L459.5 22.5M460.5 23.5L490.5 25.5M497.5 3.5L490.5 25.5M459.5 22.5L475.5 -5.5M502.5 121.5L474.5 113.5M502.5 121.5L497.5 147.5M474.5 113.5L472.5 142.5M472.5 142.5H491.5V150.5M497.5 147.5L491.5 150.5M488.5 173.5L491.5 150.5M457.5 148.5L472.5 142.5M514.5 188.5L520.5 186.5M519.5 153.5L521.5 185.5M519.5 153.5L497.5 147.5M520.5 186.5L521.5 185.5M721.5 6.5L707.5 23.5M681.5 -2.5L707.5 23.5M749.5 19.5L738.5 34.5M749.5 19.5L767.5 25.5M770.5 44.5V52.5H746.5M770.5 44.5L767.5 25.5M746.5 52.5H738.5V34.5M746.5 10.5V19.5H749.5M711.5 31.5H738.5V34.5M711.5 31.5L707.5 26.5M707.5 26.5L707.5 23.5M778.5 15.5V25.5H767.5M783.5 53.5H770.5V44.5M783.5 53.5L784.5 68.5M742.5 60.5V52.5H746.5M742.5 60.5V77.5H758.5M758.5 77.5L784.5 68.5M801.5 39.5H783.5V53.5M627.5 301.5H632.5V292.5M608.5 302.5L606.5 279.5M606.5 279.5L627.5 278.5M632.5 292.5L627.5 278.5M722.5 303.5L727.5 274.5M766.5 276.5V296.5H770.5M766.5 276.5H762.5V273.5M767.5 301.5L770.5 296.5M727.5 274.5L762.5 273.5M779.5 226.5L783.5 227.5M779.5 226.5L758.5 246.5M766.5 276.5V258.5H799.5M762.5 273.5L758.5 246.5M808.5 144.5V122.5H801.5M801.5 122.5H825.5V101.5M784.5 68.5L793.5 80.5M807.5 81.5L793.5 80.5M582.5 299.5L582.5 299.5M582.5 299.5L588.5 283.5M582.5 299.5L604.5 307.5M606.5 279.5L603.5 277.5M588.5 283.5L603.5 277.5M552.5 153.5L536.5 141.5M552.5 153.5L555.5 162.5M519.5 153.5L536.5 141.5M521.5 185.5H549.5V175.5M555.5 162.5L549.5 175.5M552.5 153.5H574.5V137.5M574.5 137.5H591.5V143.5M591.5 171.5V162.5H555.5M591.5 171.5L592.5 170.5M592.5 170.5L591.5 143.5M467.5 239.5L464.5 254.5M426.5 252.5L434.5 265.5M434.5 265.5H464.5V254.5M404.5 292.5H431.5V276.5M434.5 265.5H431.5V276.5M416.5 363.5L421.5 359.5M402.5 307.5H425.5V329.5M421.5 359.5L425.5 329.5M547.5 266.5H537.5V280.5M547.5 266.5L564.5 276.5M537.5 280.5L547.5 295.5M564.5 276.5L562.5 291.5M562.5 291.5L554.5 296.5M554.5 296.5L547.5 295.5M546.5 252.5L579.5 252.5M546.5 252.5L545.5 253.5M545.5 253.5L547.5 266.5M579.5 252.5H573.5V270.5M573.5 270.5L564.5 276.5M582.5 299.5L562.5 291.5M573.5 270.5V283.5H588.5M87.5 83.5H102.5V79.5M87.5 83.5L66.5 67.5M102.5 79.5L111.5 47.5M66.5 67.5H75.5V39.5M75.5 39.5L106.5 41.5M106.5 41.5H111.5V47.5M73.5 116.5V83.5H87.5M117.5 93.5L102.5 79.5M46.5 75.5V67.5H66.5M137.5 52.5L111.5 47.5M63.5 26.5H75.5V39.5M114.5 9.5V41.5H106.5M253.5 195.5L256.5 193.5M252.5 158.5V165.5H264.5M264.5 165.5V193.5H256.5M291.5 202.5L284.5 194.5M256.5 193.5L284.5 194.5M233.5 364.5H264.5V379.5M233.5 364.5L230.5 343.5M230.5 343.5H238.5V331.5M238.5 331.5L273.5 341.5M273.5 341.5L279.5 363.5M279.5 363.5L264.5 379.5M221.5 378.5V364.5H233.5M265.5 397.5L264.5 379.5M187.5 342.5L230.5 343.5M315.5 368.5L279.5 363.5M287.5 324.5L273.5 341.5M362.5 15.5V5.5H384.5M442.5 413.5L444.5 412.5M467.5 460.5V427.5H474.5M474.5 427.5V412.5H444.5M514.5 445.5H492.5V420.5M514.5 445.5V424.5H534.5M529.5 410.5L510.5 400.5M529.5 410.5H534.5V424.5M510.5 400.5L496.5 407.5M496.5 407.5V420.5H492.5M515.5 457.5L514.5 445.5M515.5 457.5L475.5 474.5M474.5 427.5H492.5V420.5M543.5 396.5H529.5V410.5M530.5 376.5L520.5 379.5M520.5 379.5V400.5H510.5M548.5 426.5L534.5 424.5M548.5 426.5H562.5V407.5M595.5 457.5L590.5 455.5M576.5 481.5L570.5 466.5M570.5 466.5L590.5 455.5M548.5 426.5L558.5 442.5M582.5 428.5L578.5 436.5M558.5 442.5L578.5 436.5M578.5 436.5L590.5 455.5M551.5 481.5L553.5 460.5M551.5 481.5L526.5 498.5M515.5 457.5L552.5 459.5M515.5 457.5H526.5V498.5M552.5 459.5L553.5 460.5M565.5 494.5L551.5 481.5M570.5 466.5H553.5V460.5M525.5 498.5L526.5 498.5M515.5 457.5L515.5 457.5M558.5 442.5V459.5H552.5M599.5 554.5V567.5H604.5M599.5 554.5L584.5 552.5M584.5 552.5V575.5H579.5M579.5 575.5L599.5 575.5M599.5 575.5V567.5H604.5M609.5 542.5L599.5 554.5M621.5 566.5L604.5 567.5M580.5 547.5L584.5 552.5M576.5 577.5L579.5 575.5M604.5 588.5V575.5H599.5M458.5 754.5H453.5V788.5M458.5 754.5L429.5 752.5M426.5 777.5H451.5V789.5M426.5 777.5L424.5 756.5M453.5 788.5L451.5 789.5M429.5 752.5L424.5 756.5M430.5 725.5L429.5 752.5M465.5 749.5L458.5 754.5M428.5 816.5L451.5 789.5M408.5 791.5H426.5V777.5M400.5 751.5L424.5 756.5M499.5 801.5L484.5 791.5M499.5 801.5V830.5H489.5M484.5 791.5V794.5H464.5M464.5 794.5L463.5 827.5M512.5 800.5L499.5 801.5M524.5 773.5H494.5V753.5M490.5 755.5H484.5V791.5M453.5 788.5L464.5 794.5M112.5 738.5L123.5 705.5M123.5 705.5V700.5H137.5M163.5 742.5V712.5H159.5M137.5 700.5V712.5H159.5M288.5 501.5L282.5 512.5M245.5 511.5L254.5 518.5M254.5 518.5V512.5H282.5M324.5 541.5L290.5 534.5M282.5 512.5L290.5 534.5M147.5 273.5L144.5 264.5M147.5 273.5L187.5 274.5M144.5 264.5V241.5H152.5M152.5 241.5L181.5 235.5M181.5 235.5L196.5 257.5M187.5 274.5H196.5V265.5M196.5 257.5L196.5 265.5M142.5 286.5H147.5V273.5M101.5 250.5V264.5H144.5M184.5 313.5L185.5 311.5M185.5 311.5L187.5 274.5M133.5 213.5V241.5H152.5M188.5 210.5H181.5V235.5M223.5 240.5L196.5 257.5M559.5 316.5L557.5 320.5M559.5 316.5L577.5 313.5M557.5 320.5H566.5V337.5M566.5 337.5L588.5 330.5M577.5 313.5H588.5V330.5M545.5 323.5L530.5 309.5M545.5 323.5V320.5H557.5M530.5 309.5L547.5 295.5M554.5 296.5H559.5V316.5M582.5 299.5L577.5 313.5M560.5 352.5V337.5H566.5M549.5 349.5L540.5 332.5M540.5 332.5H545.5V323.5M590.5 331.5L588.5 330.5M803.5 300.5V325.5H817.5M803.5 300.5L819.5 273.5M770.5 296.5L803.5 300.5M542.5 698.5V705.5H520.5M542.5 698.5L558.5 710.5M558.5 710.5L544.5 740.5M520.5 705.5L530.5 734.5M530.5 734.5V740.5H544.5M511.5 700.5L520.5 705.5M545.5 668.5L542.5 698.5M571.5 706.5H558.5V710.5M545.5 742.5L544.5 740.5M500.5 743.5L530.5 734.5M408.5 111.5H413.5V100.5M397.5 70.5L399.5 71.5M413.5 100.5H399.5V71.5M528.5 17.5L526.5 28.5M526.5 28.5L522.5 32.5M490.5 25.5V31.5H494.5M522.5 32.5L494.5 31.5M384.5 5.5H397.5V11.5M396.5 38.5H404.5V29.5M397.5 11.5L404.5 29.5M522.5 32.5H516.5V58.5M494.5 31.5V50.5H491.5M516.5 58.5L500.5 60.5M491.5 50.5L500.5 60.5M549.5 44.5L526.5 28.5M549.5 44.5L550.5 51.5M516.5 58.5L531.5 72.5M531.5 72.5V51.5H550.5M492.5 84.5H500.5V60.5M492.5 84.5L506.5 91.5M531.5 72.5L532.5 74.5M506.5 91.5L532.5 74.5M681.5 -2.5H665.5V9.5M665.5 9.5L638.5 2.5M544.5 2.5V16.5H567.5M586.5 -8.5L567.5 16.5M549.5 44.5L571.5 26.5M571.5 26.5L567.5 16.5M653.5 317.5H656.5V295.5M632.5 292.5L656.5 294.5M656.5 295.5L656.5 294.5M685.5 316.5V297.5H688.5M656.5 295.5L688.5 297.5M722.5 303.5H689.5V296.5M688.5 297.5L689.5 296.5M758.5 77.5V94.5H753.5M793.5 80.5H779.5V105.5M753.5 94.5L779.5 105.5M801.5 122.5L782.5 116.5M782.5 116.5L779.5 105.5M742.5 60.5H725.5V67.5M711.5 31.5L710.5 56.5M725.5 67.5H710.5V56.5M591.5 171.5L586.5 185.5M549.5 175.5L562.5 196.5M586.5 185.5H562.5V196.5M627.5 278.5V269.5H632.5M603.5 277.5L601.5 257.5M601.5 257.5L629.5 256.5M632.5 269.5L629.5 256.5M480.5 268.5L483.5 289.5M480.5 268.5L499.5 257.5M483.5 289.5L518.5 282.5M499.5 257.5L516.5 266.5M516.5 266.5L519.5 280.5M518.5 282.5L519.5 280.5M503.5 235.5H499.5V257.5M464.5 254.5L480.5 268.5M513.5 230.5V254.5H527.5M527.5 254.5H516.5V266.5M545.5 253.5L527.5 254.5M537.5 280.5L519.5 280.5M521.5 308.5L530.5 309.5M521.5 308.5V282.5H518.5M421.5 359.5V366.5H453.5M444.5 412.5L463.5 379.5M453.5 366.5V379.5H463.5M496.5 407.5L477.5 381.5M463.5 379.5L477.5 381.5M520.5 379.5V360.5H499.5M477.5 381.5H499.5V360.5M270.5 163.5V174.5H288.5M270.5 163.5L286.5 133.5M290.5 135.5L286.5 133.5M290.5 135.5L305.5 164.5M288.5 174.5L303.5 168.5M305.5 164.5L303.5 168.5M264.5 165.5L270.5 163.5M284.5 194.5V174.5H288.5M286.5 133.5L286.5 133.5M325.5 131.5L290.5 135.5M326.5 155.5H305.5V164.5M318.5 191.5L303.5 168.5M237.5 331.5L218.5 307.5M237.5 331.5L261.5 298.5M218.5 307.5L225.5 282.5M261.5 298.5L242.5 276.5M242.5 276.5H225.5V282.5M238.5 331.5L237.5 331.5M185.5 311.5H218.5V307.5M279.5 298.5L261.5 298.5M196.5 265.5V282.5H225.5M249.5 258.5L242.5 276.5M196.5 682.5L194.5 698.5M196.5 682.5L225.5 676.5M225.5 676.5V695.5H250.5M199.5 708.5H194.5V698.5M199.5 708.5H243.5V724.5M250.5 695.5L243.5 724.5M137.5 700.5H147.5V672.5M159.5 712.5L194.5 698.5M147.5 672.5L190.5 672.5M190.5 672.5L196.5 682.5M240.5 640.5L237.5 636.5M240.5 640.5L225.5 676.5M190.5 653.5L212.5 629.5M190.5 653.5L190.5 672.5M237.5 636.5L212.5 629.5M270.5 684.5L250.5 695.5M240.5 640.5V646.5H260.5M191.5 746.5V708.5H199.5M243.5 726.5L243.5 724.5M276.5 563.5L274.5 558.5M276.5 563.5V595.5H259.5M274.5 558.5L251.5 548.5M230.5 583.5V597.5H251.5M230.5 583.5L240.5 552.5M240.5 552.5H251.5V548.5M259.5 595.5L251.5 597.5M309.5 578.5L276.5 563.5M290.5 534.5L274.5 558.5M289.5 614.5V595.5H259.5M254.5 518.5L251.5 548.5M237.5 636.5L251.5 597.5M212.5 629.5L201.5 606.5M207.5 587.5L230.5 583.5M207.5 587.5L201.5 606.5M206.5 534.5L240.5 552.5M200.5 577.5H207.5V587.5M4.5 601.5H43.5V590.5M34.5 637.5L46.5 594.5M46.5 594.5H43.5V590.5M7.5 552.5L42.5 587.5M43.5 590.5L42.5 587.5M53.5 534.5H63.5V543.5M42.5 587.5L63.5 543.5M92.5 506.5V542.5H83.5M83.5 542.5L63.5 543.5M45.5 655.5L64.5 653.5M76.5 602.5H46.5V594.5M76.5 602.5L79.5 634.5M64.5 653.5V634.5H79.5M66.5 708.5V683.5H89.5M64.5 653.5H89.5V683.5M123.5 705.5V683.5H95.5M89.5 683.5L95.5 683.5M124.5 606.5L113.5 643.5M124.5 606.5L154.5 609.5M160.5 629.5L159.5 615.5M160.5 629.5L140.5 657.5M140.5 657.5V650.5H117.5M159.5 615.5L154.5 609.5M117.5 650.5H113.5V643.5M190.5 653.5H160.5V629.5M201.5 606.5V615.5H159.5M147.5 672.5H140.5V657.5M95.5 683.5H117.5V650.5M163.5 572.5H154.5V609.5M79.5 634.5L113.5 643.5M399.5 71.5L427.5 64.5M404.5 29.5L415.5 31.5M415.5 31.5H433.5V53.5M433.5 53.5V64.5H427.5M460.5 23.5L457.5 49.5M459.5 22.5L441.5 13.5M441.5 13.5H415.5V31.5M433.5 53.5V49.5H457.5M491.5 50.5H463.5V56.5M457.5 49.5L463.5 56.5M441.5 13.5L437.5 -2.5M397.5 11.5V-7.5H409.5M550.5 51.5L575.5 69.5M586.5 34.5H571.5V26.5M586.5 34.5L589.5 58.5M575.5 69.5V58.5H589.5M536.5 141.5L536.5 138.5M502.5 121.5V114.5H513.5M513.5 114.5L518.5 115.5M536.5 138.5L518.5 115.5M592.5 -10.5L606.5 14.5M637.5 2.5H606.5V14.5M586.5 34.5L602.5 25.5M602.5 25.5L606.5 14.5M589.5 58.5L603.5 63.5M603.5 63.5V44.5H629.5M602.5 25.5L629.5 44.5M707.5 26.5L670.5 40.5M665.5 9.5L668.5 38.5M670.5 40.5L668.5 38.5M637.5 2.5L636.5 40.5M668.5 38.5L636.5 40.5M629.5 44.5L632.5 44.5M632.5 44.5L636.5 40.5M727.5 274.5H712.5V258.5M758.5 246.5L735.5 234.5M712.5 258.5V234.5H735.5M779.5 226.5L771.5 215.5M771.5 215.5H739.5V210.5M739.5 210.5L733.5 215.5M735.5 234.5L733.5 215.5M771.5 215.5L776.5 185.5M739.5 210.5L745.5 187.5M745.5 187.5L776.5 185.5M799.5 184.5L778.5 183.5M778.5 183.5L776.5 185.5M802.5 150.5L775.5 150.5M782.5 116.5H774.5V124.5M774.5 124.5L775.5 150.5M778.5 183.5V156.5H768.5M775.5 150.5L768.5 156.5M599.5 212.5L575.5 225.5M599.5 212.5V215.5H614.5M614.5 215.5L616.5 226.5M616.5 226.5V253.5H597.5M575.5 225.5L582.5 249.5M582.5 249.5H597.5V253.5M601.5 257.5H597.5V253.5M629.5 256.5L634.5 245.5M634.5 245.5V226.5H616.5M579.5 252.5L582.5 249.5M560.5 205.5H568.5V221.5M560.5 205.5L537.5 207.5M568.5 221.5H546.5V236.5M537.5 207.5H530.5V225.5M530.5 225.5L546.5 236.5M586.5 185.5L599.5 212.5M562.5 196.5L560.5 205.5M575.5 225.5H568.5V221.5M520.5 186.5V207.5H537.5M546.5 252.5L546.5 236.5M514.5 230.5V225.5H530.5M656.5 294.5L657.5 277.5M689.5 296.5L690.5 267.5M657.5 277.5V267.5H690.5M632.5 269.5V272.5H653.5M657.5 277.5V272.5H653.5M533.5 355.5L523.5 347.5M499.5 360.5L500.5 360.5M500.5 360.5H523.5V347.5M540.5 332.5V336.5H524.5M523.5 347.5L524.5 336.5M123.5 604.5L81.5 599.5M123.5 604.5L123.5 554.5M81.5 599.5L96.5 552.5M123.5 554.5L96.5 552.5M76.5 602.5L81.5 599.5M124.5 606.5L123.5 604.5M130.5 550.5V554.5H123.5M83.5 542.5L96.5 552.5M482.5 86.5H464.5V69.5M482.5 86.5L472.5 109.5M464.5 69.5L439.5 90.5M472.5 109.5L452.5 108.5M452.5 108.5H439.5V91.5M439.5 91.5L439.5 90.5M492.5 84.5L482.5 86.5M463.5 56.5L464.5 69.5M474.5 113.5L472.5 109.5M513.5 114.5H506.5V91.5M427.5 64.5L439.5 90.5M441.5 129.5V108.5H452.5M413.5 100.5L439.5 91.5M591.5 103.5V119.5H567.5M591.5 103.5L591.5 102.5M591.5 102.5V80.5H572.5M572.5 80.5H547.5V93.5M567.5 119.5L557.5 115.5M557.5 115.5V94.5H547.5M547.5 93.5L547.5 94.5M574.5 137.5V119.5H567.5M591.5 143.5V133.5H602.5M602.5 133.5V103.5H591.5M617.5 89.5L603.5 63.5M617.5 89.5V102.5H591.5M575.5 69.5L572.5 80.5M532.5 74.5V93.5H547.5M536.5 138.5L557.5 115.5M518.5 115.5L547.5 94.5M592.5 170.5L609.5 172.5M614.5 215.5V211.5H619.5M609.5 172.5L624.5 194.5M619.5 211.5L624.5 194.5M609.5 172.5L627.5 157.5M641.5 186.5L624.5 194.5M641.5 186.5L644.5 166.5M644.5 166.5V157.5H627.5M602.5 133.5L624.5 133.5M627.5 157.5L624.5 133.5M617.5 89.5L620.5 90.5M632.5 44.5H643.5V78.5M620.5 90.5L643.5 78.5M624.5 133.5L631.5 127.5M631.5 127.5L632.5 124.5M620.5 90.5V124.5H632.5M712.5 258.5L710.5 257.5M733.5 215.5V209.5H714.5M714.5 209.5V226.5H698.5M698.5 226.5V257.5H710.5M690.5 267.5L692.5 265.5M710.5 257.5V265.5H692.5M653.5 240.5L659.5 243.5M653.5 240.5H649.5V217.5M659.5 243.5L669.5 243.5M669.5 243.5L681.5 224.5M681.5 224.5L674.5 205.5M649.5 217.5L664.5 200.5M674.5 205.5L665.5 200.5M665.5 200.5L664.5 200.5M634.5 245.5L653.5 240.5M653.5 272.5L659.5 243.5M619.5 211.5H649.5V217.5M692.5 265.5V243.5H669.5M698.5 226.5L681.5 224.5M714.5 209.5H705.5V194.5M705.5 194.5L674.5 205.5M641.5 186.5L664.5 200.5M521.5 308.5L521.5 308.5M524.5 336.5H518.5V330.5M521.5 308.5L518.5 330.5M644.5 166.5V161.5H655.5M631.5 127.5V143.5H656.5M656.5 143.5L655.5 161.5M665.5 200.5L674.5 170.5M655.5 161.5V170.5H674.5M705.5 194.5L706.5 179.5M706.5 179.5L678.5 169.5M674.5 170.5L678.5 169.5M656.5 143.5L673.5 133.5M678.5 169.5L686.5 144.5M673.5 133.5L686.5 144.5M745.5 187.5L737.5 174.5M768.5 156.5L755.5 155.5M737.5 174.5L755.5 155.5M706.5 179.5L718.5 168.5M737.5 174.5H718.5V168.5M632.5 124.5V106.5H664.5M643.5 78.5L646.5 78.5M646.5 78.5L664.5 106.5M670.5 40.5L675.5 61.5M646.5 78.5V61.5H675.5M710.5 56.5H685.5V67.5M685.5 67.5L675.5 61.5M673.5 133.5L671.5 108.5M664.5 106.5L671.5 108.5M489.5 338.5L491.5 335.5M489.5 338.5L466.5 340.5M491.5 335.5L490.5 310.5M466.5 340.5L451.5 318.5M456.5 303.5L480.5 296.5M456.5 303.5L451.5 318.5M480.5 296.5H490.5V310.5M500.5 360.5L489.5 338.5M518.5 330.5H491.5V335.5M453.5 366.5V340.5H466.5M521.5 308.5L490.5 310.5M425.5 329.5L451.5 318.5M431.5 276.5L456.5 303.5M483.5 289.5L480.5 296.5M725.5 67.5L723.5 86.5M685.5 67.5L690.5 92.5M723.5 86.5L690.5 92.5M671.5 108.5V101.5H686.5M690.5 92.5V101.5H686.5M753.5 94.5L747.5 98.5M774.5 124.5L748.5 125.5M747.5 98.5L748.5 125.5M723.5 86.5V94.5H729.5M747.5 98.5V94.5H729.5M755.5 155.5L741.5 133.5M748.5 125.5H741.5V133.5M707.5 120.5L718.5 117.5M707.5 120.5V141.5H700.5M718.5 117.5L738.5 133.5M738.5 133.5L716.5 156.5M700.5 141.5V156.5H716.5M686.5 101.5V120.5H707.5M729.5 94.5H718.5V117.5M686.5 144.5L700.5 141.5M741.5 133.5L738.5 133.5M718.5 168.5L716.5 156.5" fill="none" stroke="#5f6567" stroke-width="1"/>
<polygon points="5.6,704.8 11.2,703.4 18.3,700.5 24.6,699.1 30.2,699.1 30.2,703.4 26.7,705.5 27.4,708.3 33.7,706.9 40.8,705.5 47.8,704.1 48.5,706.9 45.7,708.3 45.0,715.3 49.9,716.7 51.3,723.7 56.2,725.1 60.5,723.7 66.1,726.6 71.0,727.3 73.1,732.2 75.9,736.4 76.6,740.6 73.1,739.9 70.3,743.4 66.1,744.1 68.9,747.6 75.9,750.5 83.0,754.0 87.2,756.1 95.6,756.1 104.0,753.3 112.5,753.3 115.3,757.5 116.9,754.6 121.5,748.4 129.2,745.3 135.3,750.0 144.6,748.4 147.6,753.0 150.7,742.3 149.2,730.0 153.8,723.8 160.0,728.4 166.1,733.0 163.0,742.3 160.0,753.0 166.1,756.1 175.3,750.0 184.6,746.9 196.9,748.4 212.2,754.6 224.5,758.3 233.8,759.5 241.5,758.3 236.9,754.6 229.2,749.0 215.3,745.3 201.5,740.7 196.9,733.0 189.2,726.9 181.5,717.7 184.6,711.5 188.2,699.2 184.6,689.4 176.9,688.4 175.9,683.8 181.5,680.1 189.2,678.3 196.9,673.1 204.6,665.4 212.2,657.7 216.9,653.1 219.9,650.0 212.8,663.0 216.5,656.8 215.3,651.9 221.4,653.1 223.9,649.4 233.7,649.4 241.1,645.7 251.0,645.7 255.9,649.4 265.8,651.9 273.2,654.3 280.5,653.1 284.2,650.6 291.6,649.4 297.8,653.1 301.5,654.8 300,659.3 305.5,653.8 307.4,642.7 308.5,632 310.5,624.5 314.8,622.2 318.5,624.3 319.5,632 320.3,639 325.8,648.3 333.2,659.3 340.0,660.5 354.8,656.3 369.6,652.4 389.3,648.7 406.5,646.9 421.3,647.4 438.5,649.9 453.3,654.3 468.1,660.5 477.9,666.7 487.8,674.0 497.6,682.7 505.0,688.8 510.0,695.0 513.6,701.1 514.9,708.5 519.8,711.0 527.2,709.8 534.6,711.0 540.0,713.4 530.0,711.0 533.7,718.4 542.3,717.1 552.2,711.0 562.0,703.6 571.9,696.2 579.3,691.3 583.0,683.9 589.1,677.7 596.5,674.5 603.9,675.3 612.5,674.5 616.2,679.0 623.6,683.4 631.0,686.4 638.4,693.7 643.3,702.4 650.7,709.8 656.8,713.4 656.8,720.8 660.5,728.2 667.9,733.2 672.9,740.5 677.8,745.5 681.5,752.9 683.9,760.2 690.1,756.6 700.0,757.8 702.4,765.2 704.9,772.6 711.0,780.0 713.5,787.3 711.0,792.3 712.3,810.0 712,806 6,806 6,704.8" fill="#004264" stroke="#000" stroke-width="1" stroke-linejoin="round"/>
<polygon points="807,553 801,562 798,575 801,590 797,605 800,622 798,640 802,655 807,662" fill="#004264" stroke="#000"/>
<polygon points="342.5,658.0 343.7,653.1 349.9,656.8 353.5,651.9 358.5,649.4 360.9,643.3 364.6,646.9 368.3,653.1 374.5,650.6 376.9,639.6 375.7,632.2 380.6,634.6 385.6,630.9 389.3,633.4 388.0,639.6 397.9,643.3 389.3,645.7 381.9,649.4 372.0,653.1 354.8,656.3" fill="#004264" stroke="#000" stroke-width="1"/>
<polygon points="417.6,643.3 426.2,638.3 429.9,640.8 433.6,642.0 448.4,639.6 454.5,644.5 450.8,648.2 438.5,646.9 426.2,648.2 418.8,646.9" fill="#004264" stroke="#000" stroke-width="1"/>
<polygon points="474.2,656.8 481.6,655.6 487.8,659.3 495.2,653.1 498.9,655.6 492.7,660.5 487.8,665.4 490.2,671.6 497.6,676.5 505.0,677.7 507.5,681.4 500.1,681.4 492.7,676.5 485.3,670.3 480.4,663.0 475.5,661.7" fill="#004264" stroke="#000" stroke-width="1"/>
<polygon points="507.5,695.0 512.4,696.2 515.4,703.6 513.6,711.0 510.4,709.8 508.7,702.4" fill="#004264" stroke="#000" stroke-width="1"/>
<polygon points="537.4,708.5 544.8,704.8 548.5,701.1 549.7,704.8 557.1,702.4 569.4,697.4 570.6,699.2 559.6,707.3 549.7,712.2 541.1,714.7" fill="#004264" stroke="#000" stroke-width="1"/>
<polygon points="579.3,686.4 586.7,683.9 587.9,690.0 581.7,692.5" fill="#004264" stroke="#000" stroke-width="1"/>
<polygon points="212.8,653.1 217.7,650.6 220.2,655.6 215.3,658.0" fill="#004264" stroke="#000" stroke-width="1"/>
<polygon points="15.5,719.5 23.9,716.0 32.3,719.5 39.4,721.6 35.9,726.6 30.9,729.4 26.7,727.3 21.1,723.7" fill="#5d504b" stroke="#000" stroke-width="1"/>
<polygon points="6.0,709.7 8.7,711.1 9.3,717.4 6.0,718.1" fill="#5d504b" stroke="#000" stroke-width="1"/>
<path d="" fill="#004264"/><path d="M204.5 700.5L205.5 701.5L207.5 703.5L208.5 704.5L207.5 704.5L206.5 705.5L204.5 707.5L201.5 710.5L198.5 713.5L199.5 714.5L199.5 715.5M198.5 701.5L198.5 703.5L200.5 703.5L202.5 703.5L203.5 703.5L205.5 703.5L208.5 703.5L211.5 703.5M219.5 690.5L220.5 690.5L222.5 690.5L220.5 692.5L221.5 693.5L223.5 695.5L221.5 695.5L221.5 694.5L220.5 695.5M205.5 707.5L204.5 708.5L204.5 707.5L204.5 708.5L206.5 710.5L207.5 711.5L207.5 708.5L207.5 707.5M192.5 704.5L192.5 703.5L192.5 701.5L192.5 700.5L192.5 699.5M212.5 685.5L212.5 686.5L212.5 689.5L212.5 687.5L212.5 685.5L213.5 685.5L212.5 685.5L210.5 685.5M194.5 715.5L193.5 716.5L193.5 713.5L193.5 710.5L193.5 708.5L193.5 709.5L193.5 707.5L194.5 707.5L197.5 710.5L198.5 711.5L198.5 709.5L198.5 706.5M210.5 675.5L208.5 675.5L207.5 675.5L206.5 675.5L204.5 677.5M199.5 707.5L199.5 706.5L199.5 703.5L197.5 705.5L200.5 705.5L201.5 705.5M217.5 690.5L218.5 691.5L219.5 692.5L221.5 692.5L220.5 693.5L222.5 695.5M197.5 707.5L197.5 709.5L197.5 711.5L197.5 713.5L196.5 713.5L195.5 713.5L193.5 713.5L192.5 713.5M189.5 696.5L191.5 696.5L192.5 696.5L191.5 696.5L189.5 696.5M212.5 696.5L214.5 696.5L215.5 696.5L217.5 696.5L219.5 696.5L222.5 696.5L222.5 698.5M204.5 704.5L205.5 704.5L207.5 704.5L209.5 704.5L210.5 704.5L207.5 704.5L204.5 704.5L204.5 706.5L204.5 707.5L202.5 709.5M188.5 693.5L188.5 690.5L188.5 688.5L187.5 689.5M192.5 719.5L190.5 719.5L189.5 719.5L190.5 719.5L192.5 721.5M226.5 680.5L226.5 679.5L225.5 680.5M228.5 672.5L225.5 672.5L222.5 672.5L224.5 674.5L224.5 671.5L224.5 674.5L226.5 676.5L227.5 677.5M206.5 702.5L206.5 699.5L206.5 696.5L207.5 696.5L209.5 698.5M226.5 683.5L226.5 681.5L227.5 681.5M188.5 712.5L188.5 713.5L188.5 715.5L188.5 716.5L188.5 717.5M206.5 701.5L206.5 703.5L204.5 705.5L201.5 708.5L201.5 711.5L201.5 714.5M210.5 675.5L209.5 675.5L209.5 676.5L209.5 677.5L209.5 679.5L209.5 677.5L208.5 678.5L207.5 679.5L209.5 681.5L211.5 683.5M218.5 696.5L219.5 696.5L222.5 696.5M192.5 716.5L193.5 716.5L195.5 716.5L197.5 716.5L197.5 713.5L197.5 716.5L196.5 717.5L195.5 718.5L193.5 718.5M202.5 678.5L204.5 678.5L206.5 678.5L207.5 678.5L205.5 678.5L206.5 678.5L208.5 678.5M188.5 686.5L188.5 684.5L188.5 685.5L188.5 687.5L190.5 687.5L193.5 687.5L191.5 687.5L189.5 689.5M206.5 679.5L206.5 678.5L207.5 678.5L207.5 675.5L207.5 677.5L205.5 677.5M195.5 687.5L196.5 687.5L195.5 688.5L195.5 690.5L195.5 692.5L196.5 693.5L196.5 691.5L196.5 688.5L198.5 690.5L195.5 690.5L193.5 690.5M210.5 704.5L208.5 704.5L206.5 706.5L206.5 708.5L206.5 710.5L206.5 711.5L208.5 711.5M216.5 670.5L218.5 670.5L220.5 670.5L218.5 672.5L215.5 672.5L213.5 672.5L210.5 672.5L209.5 672.5L208.5 672.5L211.5 672.5L214.5 672.5M212.5 688.5L212.5 689.5L212.5 692.5L212.5 693.5L212.5 694.5L212.5 695.5L212.5 694.5L212.5 693.5L211.5 693.5M190.5 681.5L190.5 683.5L189.5 684.5L188.5 685.5M219.5 679.5L219.5 681.5L221.5 683.5L220.5 684.5L217.5 684.5L216.5 684.5L216.5 681.5L216.5 679.5L217.5 679.5L214.5 682.5L212.5 682.5M196.5 675.5L198.5 675.5L201.5 675.5L203.5 675.5L201.5 675.5M194.5 688.5L194.5 685.5L194.5 688.5L194.5 685.5L197.5 688.5L199.5 688.5L201.5 688.5L202.5 688.5L203.5 689.5L204.5 690.5M220.5 672.5L218.5 672.5L217.5 673.5L215.5 675.5L215.5 677.5L215.5 680.5M198.5 694.5L196.5 694.5L194.5 694.5L193.5 695.5L192.5 696.5L190.5 698.5M207.5 708.5L207.5 707.5L207.5 709.5L207.5 711.5L207.5 708.5L209.5 708.5M204.5 701.5L204.5 703.5L204.5 706.5L204.5 709.5L204.5 708.5M225.5 690.5L225.5 688.5L225.5 686.5L225.5 685.5L225.5 687.5L225.5 689.5M194.5 692.5L193.5 692.5L194.5 693.5L197.5 696.5L198.5 697.5L198.5 698.5L198.5 699.5M216.5 673.5L213.5 676.5L215.5 678.5L215.5 680.5L214.5 681.5L212.5 683.5L214.5 685.5L214.5 687.5L214.5 686.5L214.5 684.5L214.5 683.5L213.5 684.5M187.5 690.5L188.5 690.5L190.5 690.5L191.5 691.5L192.5 691.5L193.5 691.5L193.5 688.5L193.5 686.5L193.5 683.5L193.5 681.5L193.5 680.5L190.5 680.5M205.5 704.5L205.5 707.5L204.5 708.5L204.5 707.5L204.5 704.5L204.5 703.5L204.5 704.5L206.5 704.5L208.5 704.5L209.5 704.5L210.5 704.5L212.5 704.5M208.5 682.5L208.5 681.5L208.5 680.5L207.5 680.5L206.5 680.5L208.5 682.5L205.5 682.5L205.5 685.5M207.5 709.5L208.5 709.5L209.5 709.5L211.5 711.5M187.5 718.5L187.5 716.5L187.5 715.5L190.5 718.5L193.5 718.5L194.5 718.5L196.5 718.5M227.5 667.5L227.5 669.5L227.5 670.5L227.5 671.5L227.5 670.5L227.5 669.5L225.5 671.5L224.5 672.5L224.5 670.5L226.5 672.5M188.5 691.5L190.5 693.5L191.5 693.5L191.5 690.5L189.5 690.5M202.5 692.5L202.5 690.5L202.5 688.5L202.5 686.5L202.5 684.5L202.5 681.5M198.5 713.5L198.5 712.5L198.5 711.5L201.5 711.5L204.5 711.5L204.5 710.5M200.5 699.5L200.5 701.5L200.5 702.5L200.5 703.5L200.5 706.5L200.5 707.5L198.5 709.5M203.5 693.5L204.5 694.5L206.5 694.5L208.5 694.5L208.5 696.5L208.5 697.5L207.5 698.5L205.5 698.5L202.5 701.5L201.5 702.5L202.5 702.5M197.5 715.5L197.5 714.5L197.5 712.5L197.5 714.5L196.5 715.5L195.5 716.5L193.5 716.5L190.5 719.5L187.5 722.5M225.5 677.5L224.5 678.5L226.5 678.5L227.5 678.5L228.5 678.5M208.5 692.5L208.5 693.5L205.5 696.5L205.5 697.5L205.5 700.5L205.5 699.5M191.5 699.5L190.5 699.5L193.5 702.5L196.5 705.5L196.5 706.5L196.5 707.5L196.5 710.5L196.5 711.5L197.5 712.5L200.5 715.5M211.5 709.5L212.5 710.5M206.5 709.5L206.5 712.5M220.5 681.5L222.5 681.5L225.5 681.5L228.5 681.5L225.5 684.5L224.5 684.5L221.5 687.5M220.5 670.5L220.5 671.5L221.5 672.5L221.5 669.5L221.5 668.5M189.5 690.5L190.5 690.5L193.5 690.5L192.5 690.5L191.5 690.5L192.5 690.5L189.5 690.5L189.5 692.5L189.5 693.5M217.5 700.5L217.5 699.5L218.5 699.5L218.5 700.5L218.5 701.5L218.5 700.5L218.5 698.5M205.5 696.5L205.5 694.5L203.5 696.5L200.5 696.5L200.5 698.5L201.5 699.5L200.5 699.5M189.5 722.5L189.5 723.5M200.5 682.5L200.5 684.5L200.5 687.5L200.5 688.5L200.5 686.5M205.5 707.5L203.5 707.5L203.5 709.5L203.5 707.5L205.5 709.5L203.5 709.5L203.5 710.5L205.5 710.5L207.5 710.5M214.5 671.5L212.5 671.5L210.5 673.5L210.5 672.5L212.5 672.5L210.5 672.5L209.5 672.5L209.5 671.5M205.5 677.5L207.5 677.5L209.5 677.5L212.5 677.5L214.5 677.5L216.5 677.5L216.5 675.5L216.5 673.5M205.5 686.5L203.5 686.5L200.5 686.5L199.5 687.5L197.5 689.5L195.5 691.5L194.5 692.5L193.5 693.5L191.5 695.5M212.5 671.5L212.5 669.5M206.5 685.5L206.5 684.5L206.5 682.5L205.5 683.5L208.5 683.5L209.5 683.5L209.5 680.5L211.5 682.5L212.5 682.5L211.5 683.5M221.5 684.5L218.5 687.5L217.5 688.5L216.5 689.5L215.5 690.5L214.5 691.5L212.5 693.5L212.5 690.5L212.5 688.5L214.5 690.5L215.5 691.5M199.5 690.5L197.5 690.5L195.5 692.5L195.5 695.5L195.5 698.5L195.5 699.5L195.5 701.5L195.5 702.5L197.5 704.5L197.5 705.5L196.5 706.5M195.5 683.5L194.5 684.5L193.5 685.5L192.5 686.5L189.5 689.5L188.5 690.5L191.5 690.5L192.5 690.5L190.5 690.5M196.5 690.5L196.5 692.5L196.5 693.5L196.5 695.5L199.5 695.5L201.5 695.5L203.5 695.5L202.5 695.5L203.5 696.5L203.5 694.5L205.5 694.5M192.5 699.5L191.5 699.5L189.5 699.5L189.5 701.5L189.5 699.5M221.5 690.5L221.5 693.5L221.5 695.5L221.5 697.5L221.5 698.5M218.5 685.5L219.5 685.5L220.5 685.5L222.5 685.5L224.5 685.5L225.5 686.5M201.5 708.5L201.5 709.5L199.5 711.5L197.5 711.5L195.5 711.5L194.5 711.5L192.5 711.5L190.5 711.5L189.5 712.5M192.5 710.5L193.5 710.5L192.5 710.5L194.5 710.5L194.5 709.5L195.5 710.5L195.5 712.5L196.5 713.5L198.5 715.5M193.5 691.5L193.5 689.5L193.5 687.5L194.5 687.5L196.5 687.5L197.5 687.5L199.5 689.5M212.5 696.5L214.5 696.5L214.5 694.5L214.5 691.5L217.5 694.5L220.5 697.5M204.5 683.5L205.5 683.5L203.5 683.5L201.5 683.5L201.5 680.5M206.5 681.5L209.5 681.5L208.5 681.5L210.5 681.5L208.5 681.5L210.5 681.5L209.5 681.5M220.5 696.5L221.5 696.5M191.5 686.5L191.5 687.5L193.5 689.5L190.5 692.5L190.5 691.5L189.5 692.5L188.5 692.5M200.5 715.5L199.5 715.5L198.5 715.5L197.5 715.5L195.5 715.5L194.5 715.5L191.5 715.5L189.5 715.5L190.5 715.5L192.5 715.5M195.5 689.5L196.5 690.5L198.5 692.5L198.5 691.5L200.5 691.5L199.5 691.5L197.5 691.5L197.5 689.5L197.5 686.5L196.5 687.5L194.5 687.5M210.5 705.5L209.5 705.5L208.5 705.5L207.5 705.5L205.5 705.5L203.5 705.5L204.5 706.5L206.5 706.5L207.5 706.5M214.5 676.5L216.5 678.5L213.5 681.5L213.5 682.5L213.5 684.5L213.5 687.5M201.5 705.5L201.5 708.5L200.5 709.5L197.5 712.5L195.5 714.5L193.5 716.5L192.5 717.5L192.5 718.5M200.5 688.5L203.5 691.5L204.5 691.5L207.5 694.5L208.5 695.5M207.5 684.5L207.5 686.5L207.5 689.5L208.5 690.5L211.5 690.5L214.5 693.5L217.5 696.5L218.5 697.5M189.5 715.5L190.5 716.5L190.5 714.5L190.5 711.5L190.5 710.5L189.5 710.5L190.5 711.5L192.5 713.5L192.5 712.5L192.5 709.5L192.5 706.5M195.5 702.5L195.5 700.5L195.5 698.5L197.5 698.5L198.5 698.5L198.5 695.5L198.5 696.5L198.5 697.5M197.5 695.5L197.5 693.5L198.5 693.5L200.5 693.5L202.5 693.5L204.5 693.5L205.5 693.5L208.5 693.5M188.5 711.5L189.5 711.5L187.5 711.5L185.5 711.5M215.5 672.5L214.5 672.5L212.5 672.5L211.5 672.5L209.5 672.5L210.5 673.5L212.5 675.5L213.5 676.5M212.5 707.5L214.5 707.5L213.5 708.5M215.5 675.5L215.5 673.5L214.5 674.5L212.5 676.5L209.5 679.5L208.5 680.5L205.5 683.5L205.5 684.5L206.5 685.5L207.5 686.5L205.5 686.5L205.5 684.5M192.5 708.5L192.5 705.5L192.5 704.5L192.5 707.5L194.5 707.5L196.5 707.5L198.5 709.5L200.5 711.5L201.5 712.5L201.5 710.5L201.5 709.5L201.5 707.5M217.5 700.5L219.5 700.5L218.5 701.5L219.5 702.5M205.5 680.5L205.5 681.5L205.5 683.5L205.5 686.5L205.5 685.5L203.5 685.5M187.5 713.5L187.5 716.5L187.5 717.5L187.5 719.5L187.5 721.5M229.5 673.5L227.5 673.5L228.5 674.5M227.5 676.5L227.5 679.5L227.5 682.5L226.5 683.5L223.5 686.5L221.5 688.5L221.5 686.5L221.5 683.5L221.5 681.5L221.5 684.5L219.5 686.5M225.5 671.5L226.5 671.5L227.5 671.5L225.5 671.5L225.5 672.5L225.5 673.5M189.5 691.5L188.5 692.5M224.5 673.5L222.5 675.5L223.5 676.5L221.5 676.5L219.5 678.5L216.5 681.5L215.5 682.5M210.5 707.5L211.5 708.5L212.5 709.5L210.5 709.5L209.5 709.5L209.5 710.5M214.5 672.5L215.5 672.5L216.5 672.5L215.5 672.5L216.5 672.5L218.5 674.5L215.5 674.5L213.5 674.5L211.5 674.5L211.5 675.5" fill="none" stroke="#000" stroke-width="1.45"/><path d="" fill="#004264"/><path d="M157.5 739.5L154.5 742.5L157.5 745.5L158.5 745.5L160.5 745.5L159.5 746.5L158.5 747.5L161.5 747.5L161.5 748.5L161.5 750.5M151.5 728.5L151.5 730.5L151.5 731.5L151.5 733.5L151.5 734.5L150.5 735.5M160.5 748.5L160.5 749.5L160.5 751.5L160.5 752.5L160.5 755.5M165.5 742.5L165.5 743.5L162.5 743.5L159.5 743.5L159.5 740.5L161.5 742.5L161.5 743.5L161.5 744.5L163.5 746.5M165.5 732.5L165.5 733.5L165.5 731.5L165.5 730.5L165.5 732.5M150.5 733.5L153.5 736.5L153.5 734.5L153.5 732.5L153.5 735.5M166.5 737.5L166.5 736.5L166.5 733.5L166.5 732.5L168.5 734.5L170.5 736.5L172.5 738.5L170.5 738.5L169.5 738.5L170.5 739.5L172.5 741.5L174.5 743.5M161.5 740.5L161.5 738.5L161.5 739.5L161.5 738.5L162.5 738.5L164.5 738.5L166.5 738.5L163.5 741.5L160.5 741.5L162.5 741.5L163.5 741.5L160.5 744.5M164.5 754.5L164.5 753.5L164.5 751.5L164.5 750.5L164.5 748.5L164.5 747.5L164.5 746.5L164.5 744.5M163.5 745.5L164.5 745.5L162.5 745.5L162.5 748.5L162.5 750.5L162.5 753.5L162.5 754.5L162.5 752.5L162.5 751.5L162.5 749.5L162.5 747.5M156.5 747.5L158.5 747.5L159.5 747.5L160.5 748.5L163.5 751.5M162.5 738.5L163.5 738.5L164.5 738.5L167.5 741.5L167.5 740.5L166.5 740.5L166.5 739.5M165.5 739.5L167.5 741.5L165.5 741.5L167.5 741.5L164.5 744.5L164.5 743.5L164.5 742.5L164.5 740.5M169.5 749.5L169.5 746.5L169.5 747.5L169.5 748.5L169.5 750.5L169.5 753.5M157.5 750.5L157.5 749.5L157.5 748.5L157.5 747.5L157.5 746.5M157.5 746.5L157.5 748.5L157.5 749.5L156.5 750.5L153.5 753.5L156.5 753.5L159.5 753.5L161.5 753.5L161.5 751.5L161.5 750.5L161.5 748.5L161.5 746.5M176.5 744.5L173.5 747.5L171.5 749.5L170.5 750.5L172.5 750.5L170.5 750.5L170.5 748.5L172.5 748.5M161.5 746.5L164.5 749.5L166.5 751.5L164.5 753.5L167.5 753.5L169.5 753.5M150.5 737.5L150.5 736.5L150.5 734.5L150.5 733.5L150.5 731.5L151.5 732.5L153.5 734.5L151.5 736.5M163.5 731.5L163.5 732.5L163.5 735.5L160.5 738.5L158.5 740.5L156.5 742.5L156.5 740.5L154.5 742.5L152.5 744.5M151.5 738.5L153.5 738.5L154.5 738.5L155.5 739.5L156.5 740.5L155.5 740.5L158.5 743.5L156.5 743.5L155.5 743.5L152.5 743.5L152.5 744.5L153.5 744.5M163.5 746.5L162.5 746.5L160.5 746.5L158.5 746.5L157.5 746.5M174.5 747.5L174.5 744.5L176.5 746.5" fill="none" stroke="#000" stroke-width="1.45"/><path d="M145.0 750.0h3v2h-3zM106.0 749.0h3v2h-3zM130.0 757.0h2v3h-2zM120.0 746.0h4v2h-4zM73.0 751.0h4v2h-4zM129.0 750.0h4v2h-4zM132.0 757.0h3v2h-3zM88.0 748.0h2v3h-2zM120.0 748.0h4v3h-4zM100.0 756.0h2v2h-2zM101.0 743.0h2v2h-2zM94.0 756.0h4v3h-4zM139.0 755.0h2v3h-2zM94.0 758.0h4v2h-4zM98.0 757.0h4v3h-4zM142.0 757.0h2v3h-2zM114.0 758.0h2v2h-2zM104.0 753.0h2v3h-2zM139.0 752.0h3v2h-3zM112.0 757.0h3v2h-3z" fill="#004264"/><path d="M145.5 746.5L145.5 749.5L145.5 750.5M106.5 752.5L109.5 752.5L109.5 749.5L109.5 748.5L109.5 746.5L106.5 749.5M120.5 752.5L119.5 752.5L117.5 752.5L118.5 752.5L120.5 752.5L122.5 752.5L123.5 753.5L124.5 753.5L126.5 753.5L127.5 753.5M138.5 754.5L138.5 752.5L138.5 750.5L139.5 751.5L137.5 751.5L136.5 752.5L134.5 754.5L131.5 754.5L129.5 754.5L127.5 754.5L130.5 757.5M110.5 749.5L113.5 749.5L116.5 749.5L117.5 749.5L119.5 749.5L120.5 749.5L120.5 746.5M70.5 753.5L70.5 750.5L70.5 747.5L70.5 744.5L70.5 745.5L70.5 746.5L70.5 748.5L73.5 751.5M86.5 755.5L87.5 755.5L88.5 755.5L90.5 755.5L92.5 755.5L93.5 755.5L96.5 755.5L95.5 756.5M90.5 756.5L90.5 755.5L89.5 756.5L87.5 756.5L86.5 756.5L86.5 757.5M120.5 751.5L122.5 751.5L122.5 750.5L123.5 750.5L125.5 752.5L127.5 754.5L130.5 757.5M128.5 750.5L127.5 751.5L128.5 751.5L128.5 750.5L128.5 747.5L128.5 749.5L128.5 750.5L129.5 750.5M133.5 754.5L130.5 757.5L132.5 757.5M100.5 754.5L99.5 755.5L97.5 757.5M68.5 745.5L68.5 746.5L68.5 747.5L68.5 749.5L68.5 750.5L68.5 751.5L68.5 753.5L68.5 756.5M88.5 744.5L87.5 744.5L87.5 741.5L86.5 742.5L88.5 744.5L90.5 746.5L90.5 745.5L87.5 745.5L86.5 745.5L85.5 745.5L87.5 747.5L88.5 748.5M118.5 748.5L118.5 750.5L118.5 748.5L118.5 746.5L120.5 748.5M109.5 751.5L109.5 752.5L109.5 754.5L109.5 757.5M94.5 752.5L95.5 752.5L93.5 752.5L92.5 752.5L91.5 753.5L92.5 753.5L93.5 753.5L92.5 753.5L90.5 755.5L88.5 757.5M125.5 756.5L127.5 756.5L125.5 756.5L127.5 756.5L125.5 756.5L122.5 756.5L121.5 756.5L118.5 756.5M97.5 757.5L97.5 755.5L98.5 755.5L101.5 755.5L100.5 756.5M101.5 745.5L101.5 744.5L101.5 743.5M74.5 756.5L74.5 755.5L74.5 754.5L76.5 754.5L78.5 754.5L79.5 754.5M98.5 757.5L99.5 757.5L97.5 757.5L96.5 757.5L95.5 757.5M91.5 753.5L94.5 756.5M137.5 751.5L137.5 750.5L140.5 750.5L140.5 751.5L140.5 753.5L140.5 755.5L139.5 755.5M98.5 752.5L98.5 751.5L98.5 749.5L100.5 751.5L101.5 752.5L103.5 754.5L104.5 755.5L101.5 755.5L101.5 757.5M117.5 749.5L119.5 749.5L120.5 749.5L122.5 749.5L124.5 749.5L125.5 749.5L127.5 751.5L128.5 751.5L131.5 751.5L132.5 751.5L134.5 753.5L137.5 753.5M91.5 745.5L92.5 745.5L91.5 745.5L93.5 747.5L96.5 750.5L98.5 752.5L98.5 753.5L98.5 755.5L98.5 757.5M117.5 751.5L116.5 751.5L116.5 750.5L116.5 749.5L113.5 749.5L112.5 749.5M103.5 744.5L104.5 745.5L107.5 748.5L108.5 749.5L109.5 750.5L111.5 752.5L113.5 754.5L115.5 756.5L115.5 753.5L117.5 753.5L117.5 754.5L117.5 756.5M88.5 755.5L88.5 754.5L86.5 754.5L84.5 756.5L83.5 757.5M142.5 750.5L142.5 751.5L142.5 753.5L142.5 754.5L142.5 757.5M125.5 754.5L123.5 754.5L121.5 754.5L121.5 752.5L123.5 752.5L124.5 752.5M103.5 756.5L103.5 753.5L101.5 753.5L99.5 753.5L102.5 753.5L104.5 753.5M125.5 746.5L127.5 746.5L129.5 748.5L132.5 751.5L134.5 751.5L136.5 751.5L138.5 751.5L139.5 752.5M138.5 746.5L140.5 746.5L143.5 746.5L144.5 746.5L141.5 746.5L140.5 747.5L138.5 749.5L135.5 752.5L132.5 755.5L131.5 756.5M111.5 756.5L112.5 757.5" fill="none" stroke="#000" stroke-width="1.45"/><path d="M186.0 728.0h3v2h-3zM176.0 744.0h4v3h-4zM233.0 756.0h4v2h-4zM204.0 749.0h2v2h-2zM223.0 756.0h2v2h-2zM220.0 754.0h2v2h-2z" fill="#004264"/><path d="M195.5 735.5L194.5 735.5L191.5 735.5L191.5 736.5L189.5 738.5L187.5 740.5L185.5 742.5L186.5 742.5L186.5 743.5L186.5 744.5L188.5 744.5L188.5 742.5M208.5 745.5L208.5 746.5L209.5 746.5L211.5 746.5L213.5 746.5L214.5 746.5L215.5 746.5M186.5 737.5L186.5 736.5L186.5 735.5L186.5 732.5L186.5 731.5L186.5 728.5M177.5 744.5L177.5 741.5L180.5 741.5L182.5 741.5L184.5 741.5L187.5 741.5L186.5 741.5L184.5 741.5L185.5 741.5L187.5 741.5M178.5 739.5L177.5 740.5L175.5 742.5L178.5 742.5L176.5 744.5M213.5 752.5L213.5 753.5M183.5 741.5L180.5 741.5L179.5 741.5L177.5 741.5L176.5 741.5L176.5 742.5L178.5 744.5M232.5 755.5L233.5 756.5M222.5 752.5L221.5 752.5L220.5 752.5L219.5 752.5L219.5 754.5L220.5 755.5M178.5 734.5L178.5 735.5L178.5 738.5L178.5 737.5L178.5 734.5L178.5 732.5L179.5 732.5L180.5 732.5M213.5 753.5L213.5 754.5L212.5 755.5M202.5 743.5L201.5 743.5L203.5 743.5L204.5 743.5L206.5 743.5L208.5 745.5L206.5 747.5L204.5 749.5M221.5 755.5L221.5 754.5L223.5 756.5M206.5 747.5L208.5 747.5L210.5 747.5L210.5 749.5L209.5 749.5L207.5 749.5L208.5 750.5L211.5 753.5M182.5 741.5L184.5 741.5L184.5 742.5L184.5 744.5L185.5 744.5L187.5 744.5M218.5 747.5L216.5 749.5L217.5 749.5L219.5 749.5L220.5 749.5L223.5 749.5M222.5 749.5L222.5 750.5L222.5 752.5L221.5 752.5L220.5 752.5L219.5 752.5L216.5 752.5L215.5 752.5M216.5 752.5L218.5 752.5L220.5 754.5M192.5 741.5L194.5 741.5L194.5 738.5L194.5 736.5L195.5 737.5L197.5 739.5L198.5 740.5L199.5 740.5L199.5 743.5" fill="none" stroke="#000" stroke-width="1.45"/><path d="" fill="#004264"/><path d="M797.5 621.5L797.5 619.5L800.5 622.5L799.5 623.5L797.5 625.5L794.5 628.5L793.5 629.5L791.5 629.5L788.5 632.5L788.5 635.5M789.5 643.5L787.5 645.5M795.5 598.5L796.5 598.5L797.5 598.5L798.5 599.5L799.5 600.5L801.5 602.5L801.5 604.5M795.5 608.5L797.5 610.5L800.5 613.5L799.5 614.5L797.5 614.5M793.5 603.5L793.5 601.5L793.5 600.5L790.5 603.5L788.5 605.5L786.5 607.5M802.5 589.5L803.5 590.5M796.5 651.5L797.5 651.5L796.5 651.5L794.5 651.5L794.5 650.5L794.5 648.5L796.5 648.5L796.5 645.5M798.5 642.5L799.5 642.5L797.5 642.5L795.5 642.5L793.5 642.5L793.5 644.5M800.5 609.5L800.5 610.5L802.5 612.5L803.5 613.5M793.5 611.5L792.5 612.5L791.5 613.5L792.5 614.5L789.5 614.5L789.5 616.5L789.5 619.5M797.5 605.5L797.5 604.5L798.5 604.5L798.5 605.5L798.5 607.5L796.5 607.5L794.5 607.5L796.5 607.5M805.5 589.5L803.5 589.5L801.5 589.5L800.5 589.5L798.5 589.5L798.5 591.5L798.5 593.5L798.5 594.5L801.5 597.5L798.5 600.5L795.5 600.5M799.5 610.5L801.5 612.5L800.5 612.5L799.5 612.5L799.5 613.5L801.5 615.5L803.5 615.5L804.5 615.5L804.5 614.5M794.5 638.5L797.5 638.5L798.5 639.5L798.5 641.5L800.5 643.5L797.5 646.5L795.5 648.5L797.5 650.5L798.5 651.5M795.5 618.5L796.5 619.5L798.5 621.5L798.5 622.5L797.5 623.5L795.5 625.5M794.5 611.5L794.5 610.5L794.5 607.5L794.5 605.5L794.5 602.5L794.5 600.5M788.5 590.5L790.5 590.5L793.5 590.5L794.5 590.5L796.5 590.5L797.5 590.5L795.5 590.5L792.5 590.5M801.5 640.5L802.5 640.5L800.5 642.5L799.5 643.5L802.5 643.5M788.5 643.5L788.5 642.5L785.5 642.5L784.5 642.5M795.5 632.5L795.5 634.5L794.5 634.5L794.5 632.5L793.5 633.5L793.5 631.5L791.5 631.5L791.5 632.5L793.5 632.5L795.5 632.5L795.5 634.5M804.5 584.5L804.5 582.5L804.5 580.5L804.5 579.5M792.5 598.5L793.5 598.5L794.5 598.5L792.5 600.5L793.5 601.5L791.5 603.5L793.5 605.5L795.5 607.5L795.5 608.5L794.5 609.5L792.5 611.5L791.5 612.5M797.5 622.5L797.5 620.5L797.5 618.5L798.5 619.5L800.5 621.5L800.5 623.5L800.5 620.5L802.5 622.5L803.5 622.5M795.5 644.5L795.5 642.5L795.5 639.5L792.5 639.5L793.5 639.5L795.5 639.5M793.5 626.5L795.5 626.5L794.5 626.5L791.5 626.5L789.5 626.5M797.5 574.5L797.5 573.5L797.5 571.5L798.5 572.5L801.5 575.5L801.5 572.5L804.5 575.5M792.5 633.5L793.5 633.5L794.5 634.5L797.5 637.5L799.5 639.5L798.5 640.5L795.5 643.5L793.5 645.5L793.5 644.5L793.5 641.5L793.5 638.5L793.5 636.5M798.5 582.5L798.5 583.5L798.5 585.5L798.5 586.5L797.5 587.5L795.5 589.5M799.5 625.5L799.5 628.5L797.5 630.5L795.5 632.5L792.5 635.5L792.5 637.5L789.5 640.5L791.5 640.5L794.5 640.5L796.5 640.5L795.5 641.5L795.5 640.5M792.5 609.5L791.5 609.5L789.5 609.5L787.5 609.5L789.5 609.5L791.5 609.5L794.5 609.5M801.5 617.5L801.5 615.5L801.5 617.5L801.5 618.5L801.5 616.5L801.5 614.5L801.5 611.5L801.5 608.5L801.5 605.5L801.5 604.5L801.5 602.5L801.5 600.5M801.5 571.5L801.5 570.5L801.5 568.5L802.5 568.5M797.5 614.5L797.5 611.5L797.5 612.5L797.5 615.5L795.5 615.5L793.5 615.5M788.5 604.5L788.5 607.5L788.5 610.5L788.5 612.5L788.5 614.5L787.5 614.5L787.5 615.5L787.5 617.5L787.5 620.5M794.5 599.5L792.5 599.5L790.5 599.5L788.5 599.5L787.5 599.5M791.5 626.5L793.5 626.5L796.5 626.5L795.5 626.5L795.5 628.5L795.5 629.5M796.5 618.5L793.5 621.5L794.5 621.5L794.5 619.5L797.5 622.5L799.5 624.5L799.5 627.5L799.5 629.5L799.5 628.5L797.5 630.5L800.5 633.5M793.5 600.5L795.5 600.5L795.5 602.5L798.5 605.5L800.5 607.5L802.5 607.5L804.5 607.5M787.5 601.5L789.5 601.5L789.5 600.5L789.5 599.5L789.5 598.5M794.5 648.5L794.5 649.5L794.5 650.5L794.5 653.5M801.5 642.5L798.5 642.5L796.5 642.5L795.5 642.5L795.5 641.5L792.5 641.5L791.5 642.5L790.5 643.5M793.5 611.5L792.5 611.5L793.5 611.5L795.5 611.5L797.5 611.5M789.5 648.5L789.5 646.5L788.5 646.5L787.5 647.5M793.5 592.5L796.5 592.5L798.5 592.5L799.5 592.5L802.5 592.5M801.5 648.5L799.5 648.5L802.5 648.5L803.5 648.5M797.5 601.5L795.5 603.5L794.5 604.5L794.5 601.5L794.5 600.5L796.5 602.5L798.5 604.5L796.5 606.5L795.5 607.5L794.5 608.5L795.5 609.5L796.5 610.5M799.5 618.5L801.5 618.5L803.5 618.5L801.5 618.5L800.5 618.5L799.5 618.5M802.5 593.5L802.5 595.5M791.5 579.5L791.5 578.5L792.5 579.5L794.5 581.5L793.5 582.5L796.5 585.5M799.5 596.5L798.5 597.5L798.5 596.5L798.5 593.5L799.5 594.5L800.5 595.5L801.5 596.5L802.5 597.5L802.5 595.5L802.5 592.5L801.5 593.5L798.5 596.5M803.5 577.5L803.5 580.5L803.5 581.5L803.5 582.5L803.5 583.5L803.5 584.5L802.5 584.5L803.5 585.5L803.5 588.5L804.5 588.5M795.5 624.5L792.5 624.5L790.5 626.5L791.5 626.5L791.5 624.5L791.5 623.5L793.5 625.5L795.5 627.5L796.5 628.5L797.5 629.5L796.5 629.5M791.5 583.5L790.5 583.5L789.5 583.5L788.5 583.5L788.5 584.5L790.5 586.5L791.5 587.5L793.5 587.5L792.5 587.5L793.5 588.5L794.5 589.5M792.5 571.5L791.5 571.5M797.5 586.5L797.5 584.5L797.5 581.5L800.5 581.5L800.5 583.5M798.5 568.5L795.5 568.5L798.5 568.5L799.5 568.5L799.5 569.5L799.5 571.5L799.5 573.5L799.5 575.5L799.5 577.5M800.5 643.5L803.5 646.5L803.5 643.5L803.5 641.5L803.5 639.5L803.5 636.5M795.5 581.5L793.5 583.5L793.5 580.5L793.5 578.5L792.5 578.5L791.5 578.5L790.5 578.5L789.5 578.5M790.5 589.5L790.5 588.5L790.5 586.5L789.5 586.5L788.5 586.5L790.5 586.5L793.5 586.5L794.5 586.5L796.5 586.5L797.5 586.5M799.5 571.5L799.5 572.5L799.5 574.5L800.5 574.5L800.5 576.5L798.5 578.5" fill="none" stroke="#000" stroke-width="1.45"/>
<polyline points="249.7,678.3 253.9,685.3 254.6,693.7 252.5,700.8 248.3,707.8 242.6,714.8 235.6,723.3 225.8,730.3" fill="none" stroke="#000" stroke-width="1.2" stroke-dasharray="5 3 2 3"/>
<path d="M242 661.5l8 1.2M254 663l9 .8M268 664.2l10 .6M281 665l6 .6M313.5 663l9 -.8M326 661.8l8 -.5" stroke="#000" stroke-width="1.6" fill="none"/>
<polyline points="781.4,646.4 781.5,648.5 782.8,649.9 784.3,651.2 785.2,652.8 784.6,655.2 785.5,656.8 786.3,658.3 786.1,660.2 785.0,661.9 784.1,663.6 784.2,665.6 784.9,667.6 784.1,669.4 782.0,670.9 782.9,673.0 785.2,674.0 785.1,676.4 785.3,678.7 787.9,679.4 789.1,681.0 789.1,683.4 789.9,685.1 791.3,686.7 793.0,688.3 791.9,690.9 792.7,692.7 794.8,694.1 795.2,696.1 793.3,698.0 793.6,700.0 794.9,702.1 794.0,703.9 792.3,705.6 792.5,707.5 793.6,709.6 792.8,711.5 790.4,712.4 790.0,714.2 790.2,716.4 789.5,718.2 787.2,719.1 786.6,721.2 787.6,723.5 787.1,725.5 785.3,727.0 784.6,728.9 785.5,731.2" fill="none" stroke="#000" stroke-width="4.2" stroke-linejoin="round"/><polyline points="781.4,646.4 781.5,648.5 782.8,649.9 784.3,651.2 785.2,652.8 784.6,655.2 785.5,656.8 786.3,658.3 786.1,660.2 785.0,661.9 784.1,663.6 784.2,665.6 784.9,667.6 784.1,669.4 782.0,670.9 782.9,673.0 785.2,674.0 785.1,676.4 785.3,678.7 787.9,679.4 789.1,681.0 789.1,683.4 789.9,685.1 791.3,686.7 793.0,688.3 791.9,690.9 792.7,692.7 794.8,694.1 795.2,696.1 793.3,698.0 793.6,700.0 794.9,702.1 794.0,703.9 792.3,705.6 792.5,707.5 793.6,709.6 792.8,711.5 790.4,712.4 790.0,714.2 790.2,716.4 789.5,718.2 787.2,719.1 786.6,721.2 787.6,723.5 787.1,725.5 785.3,727.0 784.6,728.9 785.5,731.2" fill="none" stroke="#004264" stroke-width="2.4" stroke-linejoin="round"/>
<polygon points="299.0,60.3 306.4,55.4 313.8,57.9 315.0,66.5 323.6,71.4 318.7,76.4 321.2,83.7 324.9,91.1 322.4,96.1 318.7,88.7 313.8,81.3 311.3,69.0 307.6,61.6 301.5,62.8" fill="#2b4565" stroke="#1b3a5c" stroke-width="1"/><polygon points="367.7,261.4 373.9,258.5 381.3,262.7 389.9,267.6 396.1,276.2 391.1,273.7 385.0,270.0 378.8,266.4 372.7,262.7" fill="#2b4565" stroke="#1b3a5c" stroke-width="1"/><polygon points="439.2,376.0 441.6,371.0 446.6,367.3 447.8,363.6 450.2,366.1 447.8,369.8 445.3,373.5 442.9,377.2" fill="#2b4565" stroke="#1b3a5c" stroke-width="1"/><polygon points="604.4,308.2 608.1,304.5 614.2,302.1 613.0,293.4 614.2,286.1 617.9,288.5 621.6,286.1 622.9,291.0 627.8,293.4 622.9,298.4 617.9,303.3 614.2,308.2 609.3,313.2 605.6,311.9" fill="#2b4565" stroke="#1b3a5c" stroke-width="1"/><polygon points="424.1,414.0 426.4,415.5 427.6,424.3 431.5,428.7 431.5,434.7 428.5,433.2 425.6,425.8" fill="#2b4565" stroke="#1b3a5c" stroke-width="1"/><polygon points="526.7,502.6 529.6,504.1 530.8,510.0 528.7,518.8 532.6,524.8 536.1,525.3 533.2,530.7 533.8,538.1 530.8,536.6 527.3,530.7 528.7,524.8 526.7,518.8 527.9,511.5" fill="#2b4565" stroke="#1b3a5c" stroke-width="1"/><polygon points="540.6,601.6 543.5,607.5 545.6,613.4 552.4,611.9 556.8,604.5 557.4,610.4 564.2,611.9 562.7,614.9 553.9,616.3 547.9,619.9 542.6,619.9 541.4,613.4" fill="#2b4565" stroke="#1b3a5c" stroke-width="1"/><polygon points="128.5,660.5 128.79687568380828,665.2021620842065 125.64702912260194,668.1083605042277 120.2535260275112,668.1085895499666 117.10346742992382,665.2027617387256 115.90000002704177,660.5007412287173 115.97006596759576,655.7984376106792 119.81961924266615,652.8918686068267 124.57834520692487,652.8911814696118 128.42867594872348,655.796638647127" fill="#2b4565" stroke="#1b3a5c" stroke-width="1"/><polygon points="42.2,680.5 46.6,680.2 50.1,683.7 51.8,689.0 48.3,689.8 44.8,686.3" fill="#2b4565" stroke="#1b3a5c" stroke-width="1"/><polygon points="58.9,684.6 61.5,689.0 64.1,695.1 67.7,701.3 75.6,703.0 84.4,705.7 84.4,710.9 77.3,710.1 70.3,707.4 65.0,705.7 60.6,699.5 57.1,692.5" fill="#2b4565" stroke="#1b3a5c" stroke-width="1"/><polygon points="144.1,696.0 151.1,695.1 154.7,701.3 152.9,706.5 148.5,709.2 146.7,713.6 141.5,711.8 140.6,707.4 145.0,703.9 147.6,700.4" fill="#2b4565" stroke="#1b3a5c" stroke-width="1"/><polygon points="784.7,732.8 789.7,736 794.7,746 796.4,754.4 791.4,756 786.4,747.8 784,739.5" fill="#2b4565" stroke="#1b3a5c" stroke-width="1"/>
<g fill="none" stroke="#917c18" stroke-width="1" stroke-linejoin="round"><polyline points="588.4,6.2 587.1,22.2 593.3,36.9 603.2,44.3 604.4,61.6 599.5,78.8 604.4,94.8 590.8,109.6 595.8,123.2 610.5,140.4 615.5,149.0"/><polyline points="480.0,137.9 494.8,135.5 516.9,136.7 529.3,147.8 551.4,158.9 566.2,157.6 583.4,161.3 615.5,150.2 621.6,147.3 640.1,149.0 657.3,142.9 672.1,133.0 680.0,130.5"/><polyline points="593.3,160.1 578.5,179.8 561.3,199.5"/><polyline points="659.8,142.9 669.7,152.7 672.1,162.6 680.0,170.0"/><polyline points="640.0,150.2 658.5,142.9 672.0,133.0 689.3,125.6 713.9,113.3 738.5,97.3 763.2,86.2 787.8,78.8 806.3,71.4"/><polyline points="658.5,142.9 672.0,155.2 684.3,174.9 686.8,184.7 701.6,189.7 721.3,188.4 738.5,183.5 763.2,179.8 787.8,173.6 806.3,174.9"/><polyline points="713.9,188.4 721.3,199.5"/><polyline points="6.2,256.5 36.9,255.3 64.0,249.1 93.6,240.5 110.8,234.3 135.5,225.7 160.1,222.0 177.3,220.8 200.0,209.7"/><polyline points="152.7,190.0 146.6,204.8 151.5,222.0"/><polyline points="163.8,229.4 170.0,263.9 173.6,288.5 172.4,313.2 177.3,342.7 183.5,367.3 183.5,389.5"/><polyline points="174.6,223.3 199.3,214.6 219.0,199.9 231.3,190.0"/><polyline points="219,199.9 231,190 236,182 268,170 298,165 300,165"/><polyline points="182.0,6.2 191.9,19.7 199.3,36.9 200.5,71.4 198.0,98.5 186.9,123.2 182.0,147.8 174.6,157.6 164.8,177.3 154.9,197.0"/><polyline points="241.1,6.2 228.8,19.7 227.6,44.3 221.4,60.3 200.5,71.4"/><polyline points="241.1,6.2 248.5,17.2 258.4,32.0 263.3,49.3 270.7,59.1 287.9,60.3 302.7,53.0 312.6,56.7 327.3,66.5 342.1,76.4 350.0,81.3"/><polyline points="300.0,53.0 309.9,54.2 324.6,64.0 344.3,78.8 364.0,93.6 381.3,108.4 398.5,123.2 404.7,128.1"/><polyline points="472.4,6.2 472.4,22.2 462.6,41.9 447.8,54.2 434.2,60.3 428.1,78.8 420.7,93.6 410.8,108.4 405.9,128.1"/><polyline points="300.0,165.0 319.7,160.1 336.9,157.6 349.3,150.2 369.0,147.8 386.2,141.6 404.7,133.0 423.2,134.2 447.8,130.5 467.5,134.2 487.2,140.4 500.0,137.9"/><polyline points="404.7,133.0 401.0,152.7 397.3,177.3 398.5,200.0"/><polyline points="405.9,130.5 415.8,145.3 430.5,160.1 442.9,177.3 452.7,192.1 460.1,200.0"/><polyline points="365.3,133.0 371.4,115.8 383.7,103.4 396.1,99.0 410.8,101.0 428.1,105.9 435.5,113.3 436.7,133.0 433.0,147.8 425.6,158.9 410.8,162.6 396.1,165.0 381.3,161.3 370.2,150.2 365.3,133.0"/><polyline points="397.3,190 398.5,236.8 393.6,254 396,273.7 397.3,300.8 399.8,328 402.2,362.4 404.9,380 403.4,394.8 409.3,409.5 418.2,427.3 427,451 438.8,471.6 430,492.3 418.2,516 400.4,542.5 382.7,563 359,581 329.5,598.6 308.9,607.5 304.4,620 302,640"/><polyline points="430,150 452.7,190 472.4,212 484.7,231.9 504.6,238"/><polyline points="504.6,239.3 497,263.9 482.3,286 470,305.8 457.6,325.5 445.3,337.8 428,352.6 418.2,364.9 408.4,372.3 404.9,381"/><polyline points="415.8,366 438,363.6 472.4,363.6 500,358.7 512,356.3 541.6,350 566.2,346.4 581,351.3"/><polyline points="568.7,190 553.9,209.7 536.7,224.5 521.9,236.8 504.6,238 489.9,234.3 480,227"/><polyline points="521.9,239.3 536.7,251.6 541.6,273.7 544,293.4 556.4,313 568.7,325.5 578.5,342.7 581,351.3"/><polyline points="583.4,294.7 576,305.8 572.4,320.5 574.8,332.9 580,342.7"/><polyline points="581,351.3 593.3,335.3 608,323 627.8,315.6 652.4,305.8 667.2,293.4 689.3,283.6 709,273.7 726.2,257.7 738.5,254 755.8,244.2 778,231.9 806,222"/><polyline points="581,351.3 595.8,350 618,357.5 640,363.6 664.6,367.3 701.6,371 748.4,373.5 768,364.9 787.8,355 806,337.8"/><polyline points="581,357.5 571,367.3 561.3,377.2 556.8,380 553.9,391.8 542,409.5 527.3,427.3 509.5,449.4 483,462.7 462.5,470 438.8,471.6"/><polyline points="583.4,360 593.3,369.8 600.7,382 610,403.6 627.7,421.4 633.6,436 629.2,468.6 630.7,504 639.5,533.6 649.9,560 657.3,592.7 663,620 672.9,627 682.7,637 702.4,656.8 712.3,671.6 723.2,696.3 739.9,729.5 749.8,766 753.2,791 755,806"/><polyline points="633.6,424.3 648.4,442 680,458.3 720,470 760,478 806,495"/><polyline points="716.4,190 728.7,207.2 743.4,215.9 755.8,231.9 760.7,241.7 765.6,263.9 770.5,281 787.8,293.4 806,308.2"/><polyline points="738.5,254 741,262.7 753.3,272.5 770.5,282.4"/><polyline points="595.0,349.0 593.7,355.5 590.0,360.3 585.0,362.0 580.0,360.3 576.3,355.5 575.0,349.0 576.3,342.5 580.0,337.7 585.0,336.0 590.0,337.7 593.7,342.5 595.0,349.0"/><polyline points="175.5,227.0 174.1,229.9 170.3,231.8 165.7,231.8 161.9,229.9 160.5,227.0 161.9,224.1 165.7,222.2 170.3,222.2 174.1,224.1 175.5,227.0"/><polyline points="380,392.5 389.6,381.8 393,375 399.2,370.7 405.1,380.7"/><polyline points="388,386 397.7,386 405.1,380.7 409.5,375 411,371.4 415.5,361 424.3,353.7 427.3,350"/><polyline points="401.4,350 401.8,359.6 403.6,361.8 404,367.7 405.1,380.7"/><polyline points="5.9,460.4 44.3,464.2 73.9,468.6 99.0,474.5 132.9,473.1 147.7,477.5 165.4,480.4 200.0,474.5"/><polyline points="183.2,380.0 177.3,400.7 164.0,424.3 161.0,447.9 153.6,468.6 147.7,477.5 141.8,498.2 134.4,515.9 130.0,545.4 128.5,580.9 125.6,619.9"/><polyline points="150.0,480.4 194.3,476.0 256.4,473.9 282.9,465.7 300.7,445.0 318.4,427.3 339.1,406.6 350.0,400.7"/><polyline points="350,400.7 376.8,396 404.9,381.5"/><polyline points="256.4,473.9 247.5,498.2 235.7,518.8 226.8,536.6 216.5,551.3 215.0,572.0 209.1,592.7 201.7,619.9"/><polyline points="6.2,661.2 15.8,660.0 43.9,650.3 66.8,643.3 77.3,644.1 87.9,646.8 98.4,641.5 123.0,640.6 149.4,640.6 167.0,648.5 184.5,655.6 200.0,656.4"/><polyline points="87.9,646.8 93.1,660.8 105.4,669.6 123.0,673.1 133.6,675.8 144.1,681.9 158.2,683.7 161.7,687.2"/><polyline points="130.9,580.0 127.4,597.6 126.5,615.1 128.3,632.7 133.6,650.3 136.2,657.3 132.7,667.9 131.8,674.9"/><polyline points="219.7,590.5 200.0,617.8 191.6,632.7 186.3,646.8 184.5,657.3 175.7,671.4 165.2,681.9 159.9,686.3"/><polyline points="6.2,616.0 12.3,623.9 13.2,638.0 12.3,650.3 15.8,660.0"/><polyline points="201.7,620 208,600 215,572"/><polyline points="200,656.4 230,640 260,634 290,628 302,640 330,630 352,632 380,628 410,618 440,616 470,619 500,616 530,618 560,624 590,634 620,640 650,646 680,654 702.4,659.3 730,661.7"/><polyline points="302,640 306,625 312.5,604.5 327.3,598.6 350,586.8"/><polyline points="806,548 795,565 789.7,583 784.7,606 786.4,640 779.8,656 781,668 790,670 793,660 789,650 780,648"/><polyline points="793,669 805,686 806,690"/><polyline points="730,661.7 740,663 769.8,655 779.8,654.7"/></g>
<g fill="none" stroke="#000" stroke-width="1.15" stroke-linejoin="round"><polyline points="6,105.5 155,105.5 157,108 161,114 160,123 157,128 150,133 146,139 141,145 138,149 187,149"/><polyline points="201.7,6.2 200.9,8.9 204.4,9.4 207.0,10.4 205.3,13.5 203.7,15.9 203.5,17.8 205.6,19.1 208.6,20.1 210.4,21.5 207.3,23.9 203.6,24.1 204.0,26.4 204.6,28.7 205.5,31.2 204.5,32.8 203.6,34.6 202.8,37.6 204.6,39.8 209.3,40.9 210.0,42.1 207.8,45.8 207.2,48.4 210.9,48.3 214.3,48.5 213.8,51.1 212.0,54.3 212.8,55.9 215.8,56.2 218.9,56.5 219.0,58.0 219.2,61.8 222.1,62.4 223.9,60.5 222.5,57.5 224.1,56.3 226.4,55.4"/><polyline points="226.4,55.4 226.3,53.1 228.7,52.4 230.1,51.0 231.4,49.6 231.1,47.1 231.8,45.3 232.7,43.7 235.5,43.1 237.8,42.5 239.8,41.4 241.0,39.2 243.1,38.7 244.9,39.4 246.7,40.0 248.4,41.3 249.9,42.6 252.5,42.7 254.5,43.6 255.8,45.8 257.3,47.8 259.7,47.6 261.9,47.6 264.1,47.8 266.0,48.8 267.3,50.8 268.2,52.9 270.2,53.6 273.3,53.1 276.0,52.7 277.6,52.1 280.7,52.6 282.4,50.5 282.7,47.8 281.6,46.6 281.1,44.8 281.5,42.5 280.9,40.7 279.7,39.2 278.2,37.6 277.1,35.8 278.0,33.5 278.0,31.4 277.3,29.5 277.7,27.4 279.5,26.1 281.8,25.3 283.5,23.9 285.1,24.0 286.5,22.2 287.9,20.6 289.7,20.3 291.6,20.1 293.7,20.9 295.5,20.4 297.4,19.4 299.1,17.6 301.2,17.1 303.5,18.2 305.7,18.4 307.7,17.7 307.4,15.3 306.6,13.3 308.0,11.6 309.5,10.0 307.7,7.4 305.1,6.3"/><polyline points="223.9,60.3 227.0,60.4 227.8,60.9 231.9,60.2 231.9,63.4 228.3,65.3 228.1,67.4 230.1,70.0 232.8,72.8 228.6,73.9 228.4,76.1 228.2,78.3 230.4,79.3 233.3,82.0 229.6,83.6 227.4,84.0 225.5,85.0 227.1,88.8 227.8,91.8 224.9,92.0 220.3,92.0 221.7,94.5 225.5,97.8 224.0,99.4 221.0,95.6 219.7,93.7 214.9,95.2 214.1,92.2 209.9,91.9 211.2,95.4 212.9,99.3 210.4,99.4 207.2,100.7 205.3,102.3 207.0,104.8 210.2,107.7 205.0,106.4 206.8,102.4 206.4,100.5 203.3,98.7 201.5,100.5 200.2,98.4 196.3,97.2 196.1,99.7 198.3,102.8 200.3,104.4 200.0,106.4 197.4,108.7 198.4,111.1 201.5,111.9 203.5,113.2 203.5,115.5 200.3,115.7 199.3,118.3 198.3,120.8 196.2,121.6 193.4,121.1 191.1,121.4 190.1,123.3 189.9,126.2 192.7,127.4 189.5,130.8 191.5,133.3 195.5,133.0 198.1,135.0 194.4,138.3 193.7,140.6 195.6,142.0 195.8,143.7 195.6,146.8 192.5,146.0 189.0,144.9 186.4,144.8 186.4,148.3 189.1,149.8 190.6,151.2 190.8,153.5 191.0,156.0 188.9,154.7 190.3,160.0 187.4,159.6 184.3,159.9 182.7,161.5 185.9,165.1 185.6,167.1 182.8,168.2 180.6,169.5 179.3,167.3 177.8,169.9 176.3,172.0 174.8,174.5 172.5,173.7 170.3,173.8 168.4,175.2 171.8,178.5 172.3,180.7 171.9,180.2 172.1,183.5 172.6,186.2 172.6,184.2 173.1,188.3 171.0,188.9 167.8,187.4 165.7,187.3 164.2,188.5 164.8,192.3 163.6,194.2 160.0,194.4 158.8,196.3"/><polyline points="209,104.7 311.3,104.7 310,88.7 324.6,92.4 398.5,91 423,91.6 447.8,92.4 500,94.8 578.5,96.6 635,96.8 680,96 738.5,96 768,94.3 787.8,94.3 806,97.8"/><polyline points="635.1,96.8 637.0,96.2 638.5,94.9 639.6,93.1 641.9,92.9 643.9,92.4 645.2,90.5 647.4,90.5 649.4,90.1 650.8,88.3 652.7,87.5 655.1,88.2 656.7,87.2 658.3,85.7 660.3,86.2 662.3,86.5 664.1,85.7 665.7,84.4 667.7,84.7 669.7,84.7 671.2,83.0 673.2,83.2 675.1,83.2 676.8,82.1 677.3,80.4 679.0,79.1 680.3,77.6 680.5,75.4 681.4,73.6 683.8,73.4 685.7,73.1 687.3,71.7 689.1,70.9 691.3,71.4 693.2,70.7 694.8,69.3 696.7,69.0 698.0,67.5 697.8,65.6 697.2,63.5 698.7,62.1 699.6,60.4 700.3,58.3 702.7,58.0 704.5,57.0 705.7,55.0 707.4,53.7 708.6,52.2 708.8,50.1 708.4,47.9 710.7,46.9 712.7,46.7 714.1,45.0 715.9,44.2 718.1,44.2 719.8,43.2 721.1,41.4 722.8,40.6 725.0,41.5 726.6,40.4 728.0,38.9 729.7,38.3 731.8,38.7 733.5,37.9 735.0,36.7 736.7,36.1 738.7,36.3 739.7,34.2 741.0,32.8 743.1,32.4 744.6,31.3 745.1,29.1 746.9,28.2 748.7,27.4 749.8,25.6 750.8,23.6 752.7,22.5 754.8,21.7 755.3,19.2 757.3,18.4 759.1,17.5 759.9,15.4 762.0,14.9"/><polyline points="748.4,6.2 749.8,7.7 751.5,9.0 752.1,11.1 754.1,11.9 756.2,11.7 758.3,11.6 760.3,12.3 762.4,12.0 764.3,10.4 762.7,12.7 761.1,14.3 762.9,16.6 764.3,18.2 764.4,20.5 765.2,22.4 767.4,23.7 768.2,25.8 768.7,28.1 770.3,29.7 772.5,30.6 773.4,32.6 774.6,34.3 776.9,35.0 777.7,37.1 779.2,38.9 781.7,39.2 783.6,40.5 785.1,42.3 787.3,41.0 789.3,40.5 791.6,41.3 793.5,40.3 795.4,38.9 797.7,40.0 799.3,38.4 800.7,36.8 803.3,37.3 804.6,35.6 806.1,34.1"/><polyline points="787.8,94.3 787.1,96.1 786.1,97.8 784.3,98.9 783.5,100.7 784.2,102.9 783.9,104.8 782.8,106.5 782.7,108.4 782.5,110.3 781.3,111.7 780.0,113.1 781.0,115.3 781.5,117.4 781.0,119.6 779.5,119.5 777.4,119.1 775.6,117.7 773.5,119.2 772.1,121.1 769.5,121.3 768.3,123.6 767.3,125.3 765.2,126.6 764.7,128.9 763.3,130.5 761.6,132.1 761.1,134.5 759.6,136.1 757.8,137.7 756.4,138.8 754.5,138.7 752.6,138.5 750.7,138.9 748.8,138.4 747.7,136.5 746.3,135.0 744.0,136.0 742.3,137.1 740.2,136.8 738.3,137.3 736.8,139.1 734.9,140.0 732.7,140.1 731.0,141.4 730.2,143.3 728.9,144.7 727.1,145.6 726.1,147.2 725.7,149.4 723.8,150.3 721.8,150.0 720.0,150.5 718.4,152.0 716.5,152.3 716.0,149.6 716.1,147.5 714.3,146.0 713.5,144.2 711.8,144.1 710.1,145.0 708.6,146.6 706.6,146.9 704.6,147.6 703.3,149.3 702.7,151.6 700.4,152.3 698.8,153.5 696.7,154.9 694.4,155.9 693.1,157.2 693.2,159.4 693.7,161.7 692.4,163.7 691.2,165.1 690.2,167.2 688.4,168.5 686.6,169.8 684.7,170.1 683.1,168.9 681.4,167.7 679.3,167.9 678.0,168.8 675.9,169.3 675.3,171.6 673.5,172.4 671.4,172.9 670.2,174.4 669.2,176.4 667.0,176.6 665.1,177.1 664.3,179.5 662.2,179.8 660.3,180.4 659.2,182.1 658.1,183.7 656.0,184.0 654.2,184.8 653.1,186.5 651.6,187.5 649.5,187.8 648.0,187.5 645.8,187.4 644.2,185.5 642.0,185.4 639.7,185.6"/><polyline points="680.0,167.5 678.2,168.6 676.0,168.5 673.9,168.9 672.2,170.4 670.6,171.4 668.4,171.8 667.1,173.5 665.9,175.3 664.2,176.5 661.8,176.7 660.9,178.9 659.0,179.8 656.9,180.3 655.9,182.5 654.4,183.9 652.4,184.7 650.4,184.7 648.9,186.5 647.0,186.6 644.9,186.2 643.0,186.4 641.4,187.8 639.6,188.7 637.5,188.0 635.7,188.4 634.1,189.4 632.5,190.5 630.5,189.9 628.6,190.0 627.0,191.1 625.5,192.3"/><polyline points="625.3,191.2 624.1,192.7 622.1,192.9 620.2,193.3 619.0,194.9 617.6,196.1 615.5,195.9 613.7,196.6 613.6,199.4 613.0,201.4 610.9,202.7 610.4,204.7 610.7,206.9 608.4,208.0 607.9,209.8 607.6,211.7 607.4,213.6 604.9,213.3 603.1,213.3 601.3,214.1 599.5,214.6 597.6,214.1 595.7,213.9 594.5,216.2 593.1,217.6 590.9,218.0 589.2,219.1 589.7,221.6 589.9,223.6 588.8,225.5 588.6,227.4 589.2,229.5 589.2,231.4 588.4,233.4 587.8,235.3 589.2,237.4 588.7,239.3"/><polyline points="170.0,190.0 167.9,190.8 168.0,195.0 165.2,194.8 161.7,193.5 158.3,193.9 160.1,199.1 159.8,202.1 157.5,202.4 152.9,201.5 152.9,204.0 156.6,206.7 156.8,209.3 155.7,211.9 153.6,215.1 158.0,215.8 160.7,217.0 158.0,220.5 157.7,223.0 158.5,223.5 158.6,227.7 155.5,227.0 151.8,225.5 150.0,225.4 149.0,227.9 148.8,232.1 146.1,230.5 142.8,227.6 142.1,233.1 148.0,235.6 145.4,237.2 142.8,239.8 143.2,241.6 144.1,243.4 147.8,244.5 147.8,246.4 143.9,246.7 141.2,247.0 140.8,251.0 138.8,254.1 136.0,253.4 135.5,248.1 132.2,249.1 129.1,249.8 131.0,251.0 128.0,251.9 125.5,253.2 126.0,256.1 130.9,257.1 130.0,259.2 127.4,261.5 124.4,261.6 126.0,265.4 126.7,268.4 123.2,268.8 123.3,272.7 125.3,272.7 127.8,272.0 128.7,273.8 128.3,275.8 125.1,276.9 122.0,278.0 123.1,280.6 125.1,283.6 125.7,286.1 120.8,286.5 118.7,288.0 120.6,291.0 120.5,293.9 118.6,294.8 115.3,293.8 112.8,293.8 112.1,295.9 111.3,299.7 109.2,300.3 106.7,300.0 103.6,300.2 101.4,301.3 105.1,304.8 106.8,306.3 107.2,308.2 104.7,311.1 102.4,309.5 101.3,311.8 102.6,316.1 101.8,318.2 96.3,317.2 95.9,319.5 98.7,322.8 100.9,324.9 97.3,327.6 92.7,326.3 92.6,329.4 93.6,333.6 91.6,334.3 86.9,331.5 85.4,332.7 90.1,336.2 91.7,337.8 91.0,340.9 90.2,344.2 88.8,341.4 88.5,344.9 89.4,349.6 85.5,347.8 82.8,347.6 81.8,349.7 81.9,353.3 80.1,354.4 78.6,356.1 80.8,357.1 85.3,355.9 82.5,359.7 79.2,358.6 77.4,359.9 78.1,364.9 79.7,362.8 78.4,365.5 77.3,368.1 78.1,369.8 81.3,370.3 84.5,370.7 83.0,374.1 82.1,376.4 79.4,379.0"/><polyline points="82.7,380.0 81.4,382.4 83.9,383.7 87.8,384.5 86.5,386.9 84.2,389.6 84.1,391.7 85.0,393.4 89.6,394.1 89.2,397.5 86.0,398.3 82.2,398.9 83.0,401.1 85.0,403.7 86.2,406.1 84.5,407.5 81.9,408.5 78.8,409.3 78.9,411.3 82.5,414.5 82.2,416.3 80.5,417.6 80.5,420.1 81.7,421.9 84.9,422.3 87.6,423.0 85.3,426.3 81.0,426.7 81.2,428.9 82.0,431.4 83.6,434.2 83.0,436.1 79.0,436.6 78.2,438.5 78.6,442.3 82.5,441.6 84.7,442.3 85.1,444.3 83.5,447.8 84.1,449.6 88.3,448.8 91.9,448.5 87.8,452.9 84.6,454.2 87.9,457.4 88.9,459.9 87.3,461.7 85.7,463.9 87.1,465.1 88.2,466.7 91.7,465.9 95.1,465.1 94.8,468.1 95.1,470.4 94.6,473.5 96.5,474.4 98.5,475.0 99.2,477.2 97.9,478.6 93.5,477.4 92.4,479.1 92.6,481.7 93.0,484.5 91.6,486.4 88.2,485.0 85.9,485.0 84.7,486.5 84.9,489.9 85.1,493.2 82.5,492.9 78.6,490.7 79.8,496.2 84.1,493.5 86.3,494.1 86.9,496.9 87.3,500.2 87.1,499.3 88.4,503.3 86.2,503.7 82.4,502.5 79.7,502.4 80.2,505.5 81.7,509.7 80.4,511.0 77.3,510.5 74.4,510.2 72.1,510.5 73.0,514.1 73.1,516.8 72.3,518.6 69.2,518.1 65.9,517.5 64.0,518.2 65.6,522.4 68.7,521.1 69.9,522.8 68.0,527.6 69.9,528.7 68.8,528.5 69.3,533.0 66.1,532.0 62.5,530.6 61.2,532.4 62.0,536.1 61.8,538.4 60.4,539.7 56.8,539.2 52.8,538.5 53.5,541.5 55.5,545.0 55.7,547.2 51.8,547.8 48.7,548.7 48.9,550.9 51.2,554.0 51.2,556.2 47.9,557.0 46.8,560.0 47.8,561.5 52.5,561.7 53.4,563.2 53.6,565.1 50.9,568.0 51.1,569.9 51.4,570.2 51.9,574.9 48.0,572.8 44.8,571.8 44.4,575.1 47.2,576.0 45.6,578.5 43.6,581.1 43.7,583.0 47.2,583.8 48.0,585.9 49.8,588.3 48.3,589.7 44.4,590.5 41.8,591.6 42.1,593.6"/><polyline points="6,415.5 79,415.5"/><polyline points="144,238 300,237.6 398.5,238.5 500,239.3 588.4,239.3 640,239.3 679.4,238"/><polyline points="300.2,238 304,244.2 307.6,247.9 305.2,283.6 299,325.5 295.3,362.4 293,390 286,454 280,504 280,533.6 283,586.8 284.5,620 285,651"/><polyline points="492.3,239.3 497.2,263.9 504.6,305.8 512,350 518,390 524.3,427.3 531.7,448 539,465.7 537.6,474.5 545,482 534.7,489.3 533.2,504 531.7,539.5 528.7,575 537.6,594.2 540.6,604.5 547.2,620"/><polyline points="537.6,594.2 344.3,594.2"/><polyline points="343.8,594.3 343.3,596.2 343.5,598.2 342.1,599.9 341.7,601.7 342.0,603.8 342.1,605.8 340.9,607.5 341.9,609.4 343.3,610.8 345.7,611.4 346.2,613.6 347.2,615.4 349.2,616.4 350.8,617.7 351.7,619.6 353.6,620.5 355.3,621.6 356.3,623.6 357.5,625.3 359.7,625.8 360.4,628.0 358.7,629.7 358.7,631.5 359.3,633.5 358.7,635.3 357.6,637.0 358.5,639.0 359.6,640.8 359.1,643.2 360.0,645.1 361.3,646.9 361.7,649.0 361.6,651.2 363.4,652.9"/><polyline points="44.3,594.2 186.3,594.5"/><polyline points="186.3,594.5 186.3,596.8 184.9,598.6 183.8,600.5 183.7,602.8 183.6,605.0 182.3,606.5 180.1,607.6 180.1,609.9 179.8,611.9 177.9,613.1 178.0,615.6 178.9,617.9 177.0,619.9 178.2,622.3 178.3,623.9 177.9,625.9 179.1,627.5 180.7,628.9 180.6,630.9 180.1,633.0 182.6,633.9 183.9,635.4 184.6,637.5 186.1,638.7 188.4,639.4 189.1,641.4 188.9,643.5 189.9,645.1 191.2,646.6 191.5,648.4 190.8,650.6 192.6,651.9 193.9,653.9 192.2,656.4 193.0,658.4 195.0,660.3 193.6,662.7 195.4,664.0 196.9,665.2 197.0,667.6"/><polyline points="547.2,620 640,626 690,628.7 744.2,632 745,640 746,650 752,652 758,651 760,640 759,625 760,612 765,610 778,612 790,617 800,620"/><polyline points="679.4,238.0 689.3,234.3 704.0,230.6 704.5,232.4 713.9,226.9 726.2,222.0 731.1,219.6 732.4,220.8 738.5,220.8 763.2,221.5 787.8,222.0 806.3,223.3"/><polyline points="679.4,238.0 678.6,240.0 676.4,240.4 674.6,241.3 673.7,243.3 672.1,244.4 670.5,245.4 669.5,247.0 669.0,249.1 667.0,249.8 665.5,251.1 664.6,252.8 664.2,254.6 663.2,256.2 661.7,257.5 661.2,259.3 661.2,261.4 659.5,262.6 660.5,264.9 663.3,265.0 664.0,267.2 665.2,268.9 667.0,270.1 669.1,270.5 670.0,272.4 671.1,274.0 672.8,274.9 674.8,275.5 675.5,277.5 676.4,279.3 678.7,279.5 680.9,279.8 681.9,282.0 683.7,282.9 685.8,283.3 687.8,282.9 689.9,283.8 692.1,283.8 694.2,283.1 694.9,285.3 694.9,287.3 696.9,288.4 697.7,290.0 697.6,292.1 698.9,293.5 700.4,295.0 700.6,297.1 701.3,299.0 702.6,300.5 704.0,302.0 704.1,304.2 704.6,306.1 706.7,307.5 706.6,309.8 706.6,312.0 708.7,313.5 709.6,315.4 709.7,317.5 711.8,318.5 712.5,320.4 713.1,322.3 714.5,323.8 715.9,325.2 716.0,327.5 717.5,328.9 719.2,330.2 720.6,331.4 722.0,333.0 724.4,333.0 726.0,334.3 727.4,335.9 729.1,337.2 731.2,337.7 733.0,338.8 733.5,341.0 735.1,342.3 737.1,343.1 738.3,344.6 739.0,346.8 741.3,347.3 742.1,349.0 742.3,351.0 744.0,352.1 745.2,353.5 744.9,355.8 746.7,356.8 747.9,358.2 747.7,360.4 750.1,360.9 752.0,361.4 753.0,363.6 754.7,364.4 756.8,364.7 758.2,366.1 758.9,368.0 761.1,368.6 762.2,370.1 762.8,372.1 764.5,373.2 766.0,374.3 765.5,376.7 765.5,378.7 766.9,380.6 766.9,382.6 766.3,384.7 768.4,386.3 770.5,387.5 771.4,389.9"/><polyline points="765.6,380.0 767.0,381.4 767.1,383.4 767.1,385.3 768.4,386.8 770.4,387.7 771.6,389.9 773.8,390.7 774.8,392.3 775.0,394.3 776.2,395.7 777.8,396.9 778.0,398.9 778.9,400.7 780.7,401.5 782.7,402.1 783.8,403.8 785.1,405.4 787.1,405.8 788.9,406.7 790.0,408.7 791.5,410.3 793.8,410.8 795.5,412.0 796.0,414.7 797.5,415.9 798.2,417.8 797.6,420.1 798.3,422.1 799.8,423.9 799.3,426.1 799.8,427.9 801.4,429.2 802.3,430.8 802.3,432.8 803.4,434.3 804.6,436.1 804.8,438.3 805.5,440.4 807.0,442.1"/></g>
<circle cx="407" cy="407" r="159.5" fill="none" stroke="#dcdcdc" stroke-width="1" shape-rendering="crispEdges"/>
<circle cx="407" cy="407" r="279.5" fill="none" stroke="#dcdcdc" stroke-width="1" shape-rendering="crispEdges"/>
<circle cx="407" cy="407" r="399.5" fill="none" stroke="#dcdcdc" stroke-width="1" shape-rendering="crispEdges"/>
<circle cx="407" cy="407" r="519.4" fill="none" stroke="#dcdcdc" stroke-width="1" shape-rendering="crispEdges"/>
<text x="405.5" y="371.0" font-family="'DejaVu Sans', sans-serif" font-size="10" fill="#ffffa0" text-anchor="middle" textLength="13" lengthAdjust="spacingAndGlyphs">31</text>
<rect x="394.5" y="242.5" width="22" height="10" fill="#5d504b"/>
<text x="405.5" y="251.1" font-family="'DejaVu Sans', sans-serif" font-size="10" fill="#ffffa0" text-anchor="middle" textLength="20" lengthAdjust="spacingAndGlyphs">125</text>
<rect x="394.5" y="122.5" width="22" height="10" fill="#5d504b"/>
<text x="405.5" y="131.1" font-family="'DejaVu Sans', sans-serif" font-size="10" fill="#ffffa0" text-anchor="middle" textLength="20" lengthAdjust="spacingAndGlyphs">219</text>
<rect x="394.5" y="2.5" width="22" height="10" fill="#5d504b"/>
<text x="405.5" y="11.1" font-family="'DejaVu Sans', sans-serif" font-size="10" fill="#ffffa0" text-anchor="middle" textLength="20" lengthAdjust="spacingAndGlyphs">313</text>
<circle cx="407" cy="407" r="39.6" fill="none" stroke="#f00000" stroke-width="1.2"/>
<path d="M636 771.5h7M639.5 768v7" stroke="#ffff00" stroke-width="1" fill="none" shape-rendering="crispEdges"/>
<path d="M115 715.5h7" stroke="#e8a000" stroke-width="1" fill="none" shape-rendering="crispEdges"/>
</g>
<rect x="9.5" y="759.5" width="242" height="43" fill="#000" stroke="#909090"/>
<text x="13.3" y="771" font-family="'DejaVu Sans', sans-serif" font-size="10" fill="#fff" textLength="35.3" lengthAdjust="spacingAndGlyphs">Symbols</text>
<text x="53.4" y="771" font-family="'DejaVu Sans', sans-serif" font-size="10" fill="#fff" textLength="16.6" lengthAdjust="spacingAndGlyphs">-CG</text>
<text x="77.9" y="771" font-family="'DejaVu Sans', sans-serif" font-size="10" fill="#fff" textLength="14.4" lengthAdjust="spacingAndGlyphs">-IC</text>
<text x="99" y="771" font-family="'DejaVu Sans', sans-serif" font-size="10" fill="#fff" textLength="20" lengthAdjust="spacingAndGlyphs">+CG</text>
<text x="124.2" y="771" font-family="'DejaVu Sans', sans-serif" font-size="10" fill="#fff" textLength="17.2" lengthAdjust="spacingAndGlyphs">+IC</text>
<text x="153.2" y="771" font-family="'DejaVu Sans', sans-serif" font-size="10" fill="#fff" textLength="89.8" lengthAdjust="spacingAndGlyphs">Strike age color codes</text>
<text x="13.5" y="784" font-family="'DejaVu Sans', sans-serif" font-size="10" fill="#fff" textLength="27.4" lengthAdjust="spacingAndGlyphs">Recent</text>
<text x="13.5" y="796.7" font-family="'DejaVu Sans', sans-serif" font-size="10" fill="#fff" textLength="14.5" lengthAdjust="spacingAndGlyphs">Old</text>
<g stroke="#00ffff" fill="none" stroke-width="1"><circle cx="60.5" cy="780.5" r="4"/><path d="M58 780.5h5"/><path d="M82 780.5h7"/><circle cx="110.5" cy="780.5" r="4"/><path d="M108 780.5h5M110.5 778.0v5"/><path d="M132 780.5h7M135.5 777.0v7"/></g>
<g stroke="#ffff00" fill="none" stroke-width="1"><circle cx="60.5" cy="793.5" r="4"/><path d="M58 793.5h5"/><path d="M82 793.5h7"/><circle cx="110.5" cy="793.5" r="4"/><path d="M108 793.5h5M110.5 791.0v5"/><path d="M132 793.5h7M135.5 790.0v7"/></g>
<text x="153.8" y="784" font-family="'DejaVu Sans', sans-serif" font-size="10" fill="#e8c800" textLength="15.6" lengthAdjust="spacingAndGlyphs">15+</text>
<text x="188.4" y="784" font-family="'DejaVu Sans', sans-serif" font-size="10" fill="#e89800" textLength="15.6" lengthAdjust="spacingAndGlyphs">30+</text>
<text x="223" y="784" font-family="'DejaVu Sans', sans-serif" font-size="10" fill="#e88000" textLength="15.6" lengthAdjust="spacingAndGlyphs">45+</text>
<text x="153.8" y="796.7" font-family="'DejaVu Sans', sans-serif" font-size="10" fill="#d86800" textLength="15.6" lengthAdjust="spacingAndGlyphs">60+</text>
<text x="188.4" y="796.7" font-family="'DejaVu Sans', sans-serif" font-size="10" fill="#d85000" textLength="15.6" lengthAdjust="spacingAndGlyphs">75+</text>
<text x="223" y="796.7" font-family="'DejaVu Sans', sans-serif" font-size="10" fill="#d83000" textLength="15.6" lengthAdjust="spacingAndGlyphs">90+</text>
<rect x="685" y="792" width="121" height="14" fill="#000"/>
<text x="689" y="802.5" font-family="'DejaVu Sans', sans-serif" font-size="9.5" fill="#fff" textLength="113" lengthAdjust="spacingAndGlyphs">©2005 Astrogenic Systems</text>
<rect x="812.5" y="8.5" width="319" height="319" fill="none" stroke="#c8c8c8" stroke-width="1" rx="5"/>
<rect x="812.5" y="333.5" width="319" height="114" fill="none" stroke="#c8c8c8" stroke-width="1" rx="5"/>
<rect x="812.5" y="453.5" width="319" height="349" fill="none" stroke="#c8c8c8" stroke-width="1" rx="5"/>
<rect x="819.5" y="16.5" width="57" height="17" fill="#5a0000" stroke="#c0c0c0" stroke-width="1"/>
<text x="824.3" y="29.8" font-family="'DejaVu Serif', serif" font-size="12" font-weight="700" fill="#d8d8d8" text-anchor="start" textLength="48.4" lengthAdjust="spacingAndGlyphs">STRIKE</text>
<rect x="883.5" y="16.5" width="57" height="17" fill="#303030" stroke="#b0b0b0" stroke-width="1"/>
<text x="890.7" y="29.8" font-family="'DejaVu Serif', serif" font-size="12" font-weight="700" fill="#c8c8c8" text-anchor="start" textLength="42.7" lengthAdjust="spacingAndGlyphs">NOISE</text>
<rect x="994.5" y="16.5" width="127" height="17" fill="#303030" stroke="#c0c0c0" stroke-width="1"/>
<text x="998.6" y="30" font-family="'DejaVu Sans', sans-serif" font-size="12.5" font-weight="700" fill="#fff" text-anchor="start" textLength="61.7" lengthAdjust="spacingAndGlyphs">Bng 147°</text>
<text x="1075.6" y="30" font-family="'DejaVu Sans', sans-serif" font-size="12.5" font-weight="700" fill="#00e000" text-anchor="start" textLength="42.2" lengthAdjust="spacingAndGlyphs">338mi</text>
<rect x="821.5" y="64.5" width="81" height="15" fill="#505050" stroke="#c8c8c8" stroke-width="1"/>
<text x="829.4" y="76" font-family="'DejaVu Sans', sans-serif" font-size="11.3" font-weight="400" fill="#f0f0f0" text-anchor="start" textLength="65.4" lengthAdjust="spacingAndGlyphs">Strikes/min</text>
<rect x="931.5" y="64.5" width="81" height="15" fill="#505050" stroke="#c8c8c8" stroke-width="1"/>
<text x="943.7" y="76" font-family="'DejaVu Sans', sans-serif" font-size="11.3" font-weight="400" fill="#f0f0f0" text-anchor="start" textLength="56.5" lengthAdjust="spacingAndGlyphs">Close/min</text>
<rect x="1041.5" y="64.5" width="81" height="15" fill="#505050" stroke="#c8c8c8" stroke-width="1"/>
<text x="1050.6" y="76" font-family="'DejaVu Sans', sans-serif" font-size="11.3" font-weight="400" fill="#f0f0f0" text-anchor="start" textLength="62" lengthAdjust="spacingAndGlyphs">Noises/min</text>
<text x="902.5" y="111" font-family="'DejaVu Sans', sans-serif" font-size="27" font-weight="700" fill="#fff" text-anchor="end">0</text>
<text x="1012.5" y="111" font-family="'DejaVu Sans', sans-serif" font-size="27" font-weight="700" fill="#fff" text-anchor="end">0</text>
<text x="1122.5" y="111" font-family="'DejaVu Sans', sans-serif" font-size="27" font-weight="700" fill="#c0c0c0" text-anchor="end">0</text>
<text x="826.6" y="143" font-family="'DejaVu Sans', sans-serif" font-size="12.3" font-weight="400" fill="#fff" text-anchor="start" textLength="76.2" lengthAdjust="spacingAndGlyphs">Total Strikes</text>
<text x="902.8" y="161" font-family="'DejaVu Sans', sans-serif" font-size="12.3" font-weight="400" fill="#fff" text-anchor="end">16</text>
<text x="944.6" y="143" font-family="'DejaVu Sans', sans-serif" font-size="12.3" font-weight="400" fill="#fff" text-anchor="start" textLength="68.3" lengthAdjust="spacingAndGlyphs">Total Close</text>
<text x="1012.8" y="161" font-family="'DejaVu Sans', sans-serif" font-size="12.3" font-weight="400" fill="#fff" text-anchor="end">0</text>
<text x="1047.6" y="143" font-family="'DejaVu Sans', sans-serif" font-size="12.3" font-weight="400" fill="#c0c0c0" text-anchor="start" textLength="75.1" lengthAdjust="spacingAndGlyphs">Total Noises</text>
<text x="1122.8" y="161" font-family="'DejaVu Sans', sans-serif" font-size="12.3" font-weight="400" fill="#c8c8c8" text-anchor="end">94</text>
<text x="821.4" y="215" font-family="'DejaVu Sans', sans-serif" font-size="12.3" font-weight="400" fill="#c0c0c0" text-anchor="start" textLength="164.2" lengthAdjust="spacingAndGlyphs">Lightning type distribution</text>
<line x1="821" y1="217.5" x2="1124" y2="217.5" stroke="#b0b0b0" stroke-width="1" shape-rendering="crispEdges"/>
<text x="821.3" y="237" font-family="'DejaVu Sans', sans-serif" font-size="12" font-weight="700" fill="#fff" text-anchor="start" textLength="84" lengthAdjust="spacingAndGlyphs">Cloud-ground</text>
<text x="913" y="237" font-family="'DejaVu Sans', sans-serif" font-size="12" font-weight="400" fill="#e0e0e0" text-anchor="start" textLength="8.5" lengthAdjust="spacingAndGlyphs">+</text>
<rect x="925.5" y="227.5" width="50" height="10" fill="#000" stroke="#a0a0a0" stroke-width="1" rx="1.5"/>
<rect x="926" y="228" width="6" height="9" fill="#ff0000"/>
<text x="979.6" y="237" font-family="'DejaVu Sans', sans-serif" font-size="12" font-weight="700" fill="#fff" text-anchor="start" textLength="29" lengthAdjust="spacingAndGlyphs">13%</text>
<rect x="1016" y="231" width="7" height="2" fill="#d0d0d0"/>
<rect x="1028.5" y="227.5" width="50" height="10" fill="#000" stroke="#a0a0a0" stroke-width="1" rx="1.5"/>
<rect x="1029" y="228" width="13" height="9" fill="#90d0ff"/>
<text x="1082.3" y="237" font-family="'DejaVu Sans', sans-serif" font-size="12" font-weight="700" fill="#fff" text-anchor="start" textLength="29.4" lengthAdjust="spacingAndGlyphs">25%</text>
<text x="821.3" y="261" font-family="'DejaVu Sans', sans-serif" font-size="12" font-weight="700" fill="#c8c8c8" text-anchor="start" textLength="37.5" lengthAdjust="spacingAndGlyphs">Count</text>
<text x="925.5" y="261" font-family="'DejaVu Sans', sans-serif" font-size="12" font-weight="700" fill="#fff" text-anchor="start" textLength="7.5" lengthAdjust="spacingAndGlyphs">2</text>
<text x="1028" y="261" font-family="'DejaVu Sans', sans-serif" font-size="12" font-weight="700" fill="#fff" text-anchor="start" textLength="8" lengthAdjust="spacingAndGlyphs">4</text>
<text x="821.3" y="291" font-family="'DejaVu Sans', sans-serif" font-size="12" font-weight="700" fill="#fff" text-anchor="start" textLength="63.5" lengthAdjust="spacingAndGlyphs">Intracloud</text>
<text x="913" y="291" font-family="'DejaVu Sans', sans-serif" font-size="12" font-weight="400" fill="#e0e0e0" text-anchor="start" textLength="8.5" lengthAdjust="spacingAndGlyphs">+</text>
<rect x="925.5" y="281.5" width="50" height="10" fill="#000" stroke="#a0a0a0" stroke-width="1" rx="1.5"/>
<rect x="926" y="282" width="12" height="9" fill="#f060b0"/>
<text x="979.6" y="291" font-family="'DejaVu Sans', sans-serif" font-size="12" font-weight="700" fill="#fff" text-anchor="start" textLength="29" lengthAdjust="spacingAndGlyphs">25%</text>
<rect x="1016" y="285" width="7" height="2" fill="#d0d0d0"/>
<rect x="1028.5" y="281.5" width="50" height="10" fill="#000" stroke="#a0a0a0" stroke-width="1" rx="1.5"/>
<rect x="1029" y="282" width="18" height="9" fill="#00f000"/>
<text x="1082.3" y="291" font-family="'DejaVu Sans', sans-serif" font-size="12" font-weight="700" fill="#fff" text-anchor="start" textLength="29.4" lengthAdjust="spacingAndGlyphs">38%</text>
<text x="821.3" y="315" font-family="'DejaVu Sans', sans-serif" font-size="12" font-weight="700" fill="#c8c8c8" text-anchor="start" textLength="37.5" lengthAdjust="spacingAndGlyphs">Count</text>
<text x="925.5" y="315" font-family="'DejaVu Sans', sans-serif" font-size="12" font-weight="700" fill="#fff" text-anchor="start" textLength="8" lengthAdjust="spacingAndGlyphs">4</text>
<text x="1028" y="315" font-family="'DejaVu Sans', sans-serif" font-size="12" font-weight="700" fill="#fff" text-anchor="start" textLength="8" lengthAdjust="spacingAndGlyphs">6</text>
<text x="822.4" y="352.6" font-family="'DejaVu Sans', sans-serif" font-size="16" font-weight="700" fill="#00f000" text-anchor="start" textLength="201" lengthAdjust="spacingAndGlyphs">1/30/2026 7:14:52 PM</text>
<line x1="821" y1="358.5" x2="1123" y2="358.5" stroke="#a0a0a0" stroke-width="1" shape-rendering="crispEdges"/>
<text x="821.5" y="388" font-family="'DejaVu Sans', sans-serif" font-size="12.3" font-weight="400" fill="#fff" text-anchor="start" textLength="48" lengthAdjust="spacingAndGlyphs">Squelch</text>
<text x="909.8" y="388" font-family="'DejaVu Sans', sans-serif" font-size="12.3" font-weight="400" fill="#fff" text-anchor="start">0</text>
<text x="981.4" y="388" font-family="'DejaVu Sans', sans-serif" font-size="12.3" font-weight="400" fill="#fff" text-anchor="start" textLength="43.5" lengthAdjust="spacingAndGlyphs">Upload</text>
<text x="1061.4" y="388" font-family="'DejaVu Sans', sans-serif" font-size="12.3" font-weight="400" fill="#c0c0c0" text-anchor="start" textLength="53.4" lengthAdjust="spacingAndGlyphs">Disabled</text>
<text x="821.5" y="408" font-family="'DejaVu Sans', sans-serif" font-size="12.3" font-weight="400" fill="#fff" text-anchor="start" textLength="72" lengthAdjust="spacingAndGlyphs">Persistence</text>
<text x="909.8" y="408" font-family="'DejaVu Sans', sans-serif" font-size="12.3" font-weight="400" fill="#fff" text-anchor="start" textLength="41.5" lengthAdjust="spacingAndGlyphs">90 min</text>
<text x="981.4" y="408" font-family="'DejaVu Sans', sans-serif" font-size="12.3" font-weight="400" fill="#fff" text-anchor="start" textLength="50.5" lengthAdjust="spacingAndGlyphs">Capture</text>
<text x="1061.4" y="408" font-family="'DejaVu Sans', sans-serif" font-size="12.3" font-weight="400" fill="#00e000" text-anchor="start" textLength="36.5" lengthAdjust="spacingAndGlyphs">Active</text>
<text x="821.5" y="428" font-family="'DejaVu Sans', sans-serif" font-size="12.3" font-weight="400" fill="#fff" text-anchor="start" textLength="39" lengthAdjust="spacingAndGlyphs">Range</text>
<text x="909.8" y="428" font-family="'DejaVu Sans', sans-serif" font-size="12.3" font-weight="400" fill="#fff" text-anchor="start" textLength="41.5" lengthAdjust="spacingAndGlyphs">313 mi</text>
<text x="981.4" y="428" font-family="'DejaVu Sans', sans-serif" font-size="12.3" font-weight="400" fill="#fff" text-anchor="start" textLength="52.3" lengthAdjust="spacingAndGlyphs">Receiver</text>
<text x="1061.4" y="428" font-family="'DejaVu Sans', sans-serif" font-size="12.3" font-weight="400" fill="#00e000" text-anchor="start" textLength="50.3" lengthAdjust="spacingAndGlyphs">Enabled</text>
<text x="821.5" y="475" font-family="'DejaVu Sans', sans-serif" font-size="12.3" font-weight="400" fill="#c0c0c0" text-anchor="start" textLength="43.3" lengthAdjust="spacingAndGlyphs">Uptime</text>
<text x="909.8" y="475" font-family="'DejaVu Sans', sans-serif" font-size="12.3" font-weight="400" fill="#fff" text-anchor="start" textLength="43.5" lengthAdjust="spacingAndGlyphs">462:59</text>
<text x="981.4" y="475" font-family="'DejaVu Sans', sans-serif" font-size="12.3" font-weight="400" fill="#c0c0c0" text-anchor="start" textLength="61" lengthAdjust="spacingAndGlyphs">Peak time</text>
<text x="1061.4" y="475" font-family="'DejaVu Sans', sans-serif" font-size="12.3" font-weight="400" fill="#c0c0c0" text-anchor="start" textLength="23.5" lengthAdjust="spacingAndGlyphs">Plot</text>
<text x="821.5" y="498" font-family="'DejaVu Sans', sans-serif" font-size="12.3" font-weight="400" fill="#c0c0c0" text-anchor="start" textLength="60" lengthAdjust="spacingAndGlyphs">Peak rate</text>
<text x="909.8" y="498" font-family="'DejaVu Sans', sans-serif" font-size="12.3" font-weight="400" fill="#fff" text-anchor="start" textLength="34" lengthAdjust="spacingAndGlyphs">2/min</text>
<text x="981.4" y="498" font-family="'DejaVu Sans', sans-serif" font-size="12.3" font-weight="400" fill="#fff" text-anchor="start" textLength="50" lengthAdjust="spacingAndGlyphs">4:12 AM</text>
<text x="1061.4" y="498" font-family="'DejaVu Sans', sans-serif" font-size="12.3" font-weight="400" fill="#fff" text-anchor="start" textLength="35.5" lengthAdjust="spacingAndGlyphs">Strike</text>
<text x="822.4" y="528" font-family="'DejaVu Sans', sans-serif" font-size="12.3" font-weight="400" fill="#d0d0d0" text-anchor="start" textLength="75.5" lengthAdjust="spacingAndGlyphs">Trend graph</text>
<text x="908.6" y="528" font-family="'DejaVu Sans', sans-serif" font-size="12.3" font-weight="400" fill="#fff" text-anchor="start" textLength="41" lengthAdjust="spacingAndGlyphs">60 min</text>
<line x1="1088.5" y1="542" x2="1088.5" y2="778" stroke="#c0c0c0" stroke-width="1" shape-rendering="crispEdges"/>
<line x1="822" y1="777.5" x2="1089" y2="777.5" stroke="#c0c0c0" stroke-width="1" shape-rendering="crispEdges"/>
<line x1="1084" y1="542.5" x2="1090" y2="542.5" stroke="#c0c0c0" stroke-width="1" shape-rendering="crispEdges"/>
<text x="1092.2" y="546.6" font-family="'DejaVu Sans', sans-serif" font-size="11" font-weight="400" fill="#c8c8c8" text-anchor="start" textLength="13.3" lengthAdjust="spacingAndGlyphs">30</text>
<line x1="1086" y1="581.5" x2="1090" y2="581.5" stroke="#c0c0c0" stroke-width="1" shape-rendering="crispEdges"/>
<line x1="1084" y1="620.5" x2="1090" y2="620.5" stroke="#c0c0c0" stroke-width="1" shape-rendering="crispEdges"/>
<text x="1092.2" y="624.6" font-family="'DejaVu Sans', sans-serif" font-size="11" font-weight="400" fill="#c8c8c8" text-anchor="start" textLength="13.3" lengthAdjust="spacingAndGlyphs">20</text>
<line x1="1086" y1="659.5" x2="1090" y2="659.5" stroke="#c0c0c0" stroke-width="1" shape-rendering="crispEdges"/>
<line x1="1084" y1="698.5" x2="1090" y2="698.5" stroke="#c0c0c0" stroke-width="1" shape-rendering="crispEdges"/>
<text x="1092.2" y="702.6" font-family="'DejaVu Sans', sans-serif" font-size="11" font-weight="400" fill="#c8c8c8" text-anchor="start" textLength="13.3" lengthAdjust="spacingAndGlyphs">10</text>
<line x1="1086" y1="737.5" x2="1090" y2="737.5" stroke="#c0c0c0" stroke-width="1" shape-rendering="crispEdges"/>
<line x1="822.5" y1="775" x2="822.5" y2="778" stroke="#c0c0c0" stroke-width="1" shape-rendering="crispEdges"/>
<text x="820.4" y="793" font-family="'DejaVu Sans', sans-serif" font-size="11" font-weight="400" fill="#c8c8c8" text-anchor="start" textLength="12.8" lengthAdjust="spacingAndGlyphs">60</text>
<line x1="866.5" y1="775" x2="866.5" y2="778" stroke="#c0c0c0" stroke-width="1" shape-rendering="crispEdges"/>
<text x="864.4" y="793" font-family="'DejaVu Sans', sans-serif" font-size="11" font-weight="400" fill="#c8c8c8" text-anchor="start" textLength="12.8" lengthAdjust="spacingAndGlyphs">50</text>
<line x1="911.5" y1="775" x2="911.5" y2="778" stroke="#c0c0c0" stroke-width="1" shape-rendering="crispEdges"/>
<text x="909.4" y="793" font-family="'DejaVu Sans', sans-serif" font-size="11" font-weight="400" fill="#c8c8c8" text-anchor="start" textLength="12.8" lengthAdjust="spacingAndGlyphs">40</text>
<line x1="955.5" y1="775" x2="955.5" y2="778" stroke="#c0c0c0" stroke-width="1" shape-rendering="crispEdges"/>
<text x="953.4" y="793" font-family="'DejaVu Sans', sans-serif" font-size="11" font-weight="400" fill="#c8c8c8" text-anchor="start" textLength="12.8" lengthAdjust="spacingAndGlyphs">30</text>
<line x1="1000.5" y1="775" x2="1000.5" y2="778" stroke="#c0c0c0" stroke-width="1" shape-rendering="crispEdges"/>
<text x="998.4" y="793" font-family="'DejaVu Sans', sans-serif" font-size="11" font-weight="400" fill="#c8c8c8" text-anchor="start" textLength="12.8" lengthAdjust="spacingAndGlyphs">20</text>
<line x1="1044.5" y1="775" x2="1044.5" y2="778" stroke="#c0c0c0" stroke-width="1" shape-rendering="crispEdges"/>
<text x="1042.4" y="793" font-family="'DejaVu Sans', sans-serif" font-size="11" font-weight="400" fill="#c8c8c8" text-anchor="start" textLength="12.8" lengthAdjust="spacingAndGlyphs">10</text>
<line x1="1088.5" y1="775" x2="1088.5" y2="778" stroke="#c0c0c0" stroke-width="1" shape-rendering="crispEdges"/>
<text x="1086.4" y="793" font-family="'DejaVu Sans', sans-serif" font-size="11" font-weight="400" fill="#c8c8c8" text-anchor="start" textLength="6.4" lengthAdjust="spacingAndGlyphs">0</text>
<text x="1100.8" y="793" font-family="'DejaVu Sans', sans-serif" font-size="11" font-weight="400" fill="#c8c8c8" text-anchor="start" textLength="17.4" lengthAdjust="spacingAndGlyphs">min</text>
<polyline points="891.5,777.5 892.5,770.5 897.5,770.5 899.5,777.5" fill="none" stroke="#fff" stroke-width="1"/>
<polyline points="1061.5,777.5 1063.5,770.5 1066.5,770.5 1067.5,777.5" fill="none" stroke="#fff" stroke-width="1"/>
</svg>
</body></html>
